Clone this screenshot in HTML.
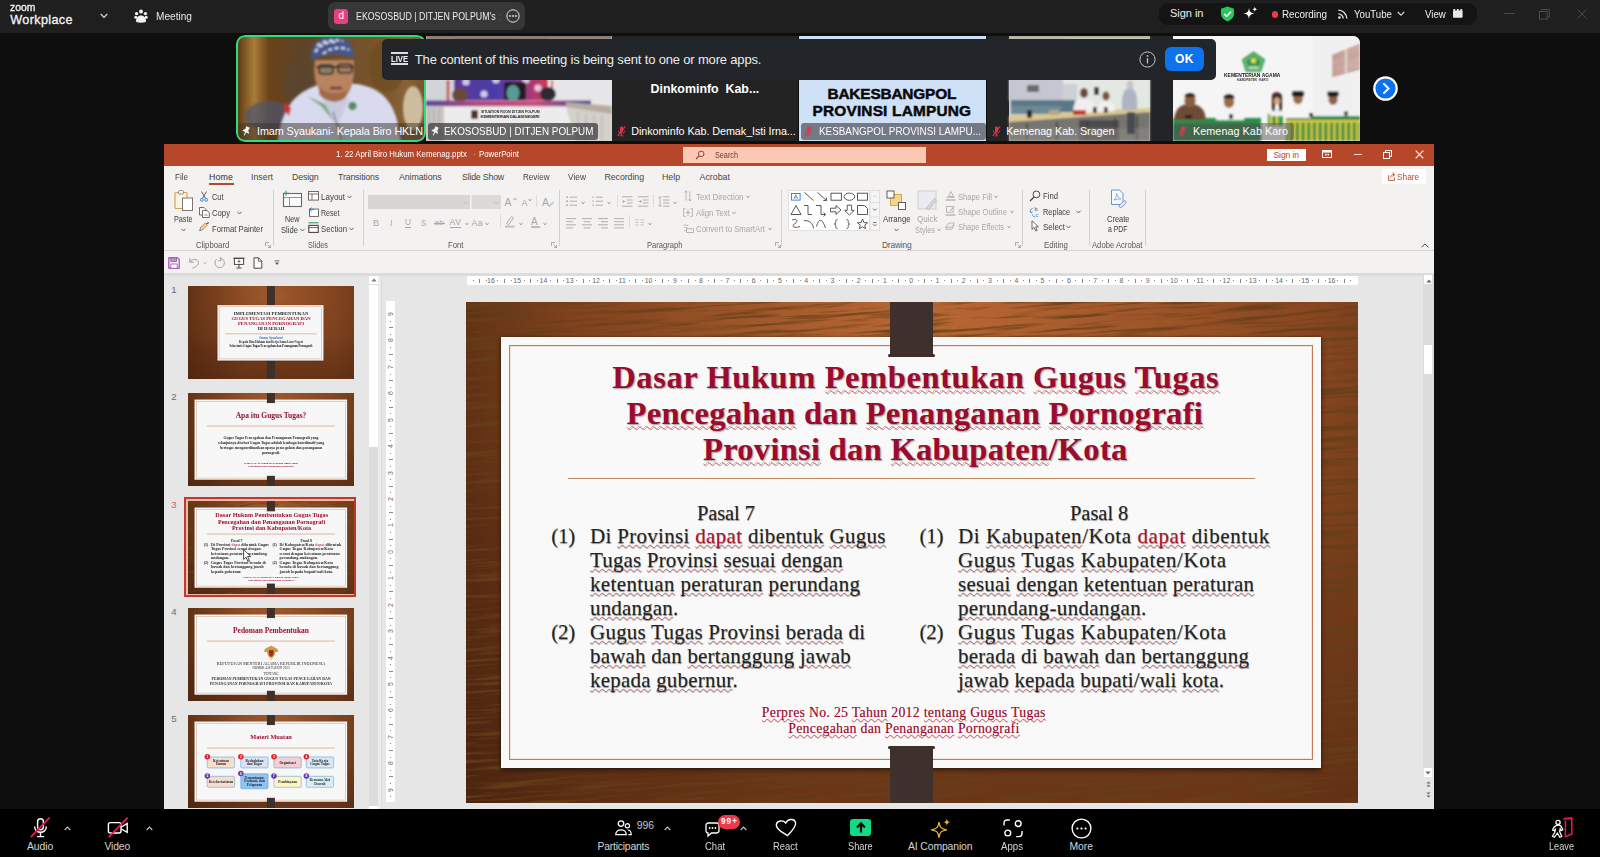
<!DOCTYPE html>
<html lang="en">
<head>
<meta charset="utf-8">
<title>Zoom Workplace - Meeting</title>
<style>
*{box-sizing:border-box;margin:0;padding:0}
html,body{width:1600px;height:857px;overflow:hidden;background:#0e0e0e}
body{position:relative;font-family:"Liberation Sans",sans-serif;color:#fff;font-size:11px}
.t{position:absolute;white-space:pre;line-height:1}
.b{position:absolute;display:block}
svg{overflow:visible}
#topbar{position:absolute;left:0;top:0;width:1600px;height:33px;background:#1f1f1f}
#bottombar{position:absolute;left:0;top:809px;width:1600px;height:48px;background:#000}
#strip{position:absolute;left:0;top:36px;width:1600px;height:106px}
#banner{position:absolute;left:382px;top:38.5px;width:834px;height:41px;background:#22262b;border-radius:5px}
#ppt{position:absolute;left:164px;top:144px;width:1270px;height:665px;background:#e6e6e6;overflow:hidden;color:#444}
#ptitle{position:absolute;left:0;top:0;width:1270px;height:22px;background:#b7472a}
#ptabs{position:absolute;left:0;top:22px;width:1270px;height:22px;background:#f3f2f1}
#pribbon{position:absolute;left:0;top:44px;width:1270px;height:63px;background:#f3f2f1;border-bottom:1px solid #d6d4d2}
#pqat{position:absolute;left:0;top:107px;width:1270px;height:22px;background:#f3f2f1}

#slide{position:absolute;left:302px;top:158px;width:892px;height:501px;overflow:hidden;background:#80421d}
.wood{position:absolute;inset:0;background-image:radial-gradient(ellipse 62% 75% at 52% 4%,rgba(222,128,66,.62) 0%,rgba(190,104,50,.3) 55%,rgba(160,84,40,0) 100%),linear-gradient(90deg,rgba(28,10,2,.42) 0,rgba(28,10,2,.2) 12%,rgba(28,10,2,0) 40%,rgba(28,10,2,0) 85%,rgba(28,10,2,.12) 100%),linear-gradient(180deg,rgba(28,10,2,0) 50%,rgba(28,10,2,.22) 100%)}
#paper{position:absolute;left:35px;top:35px;width:820px;height:431px;background:#f9f9f9;box-shadow:0 2px 5px rgba(0,0,0,.55),0 0 2px rgba(0,0,0,.3)}
#paper .inner{position:absolute;left:8px;top:8px;right:8px;bottom:8px;border:1px solid #c27c56;box-shadow:inset 0 0 0 1px rgba(236,214,190,.55)}
.grain{position:absolute;left:0;top:0}
.clip{position:absolute;left:424px;width:43px;background:#3e312c}
.clip i{position:absolute;left:-2px;right:-2px;height:3px;background:#3e312c;border-radius:2px}
.serif{font-family:"Liberation Serif",serif}
.ln1{position:absolute;white-space:nowrap;line-height:1}
#stitle{font-weight:bold;color:#9c0a2d;text-shadow:1px 1px 1.5px rgba(0,0,0,.38)}
#stitle .sq{text-decoration-color:rgba(214,52,62,.45);text-underline-offset:1px}
#sline{position:absolute;left:102px;top:176px;width:687px;height:1px;background:#c08a62}
.body{color:#242424;text-shadow:.4px .5px .8px rgba(0,0,0,.42)}
.body b{font-weight:normal;color:#b40f30}
.sq{text-decoration:underline wavy rgba(214,52,62,.62);text-decoration-thickness:.7px;text-underline-offset:.6px;text-decoration-skip-ink:none}
#sfoot{color:#9c0a2d;text-shadow:.3px .3px .5px rgba(120,0,20,.4)}

.th{position:absolute;left:24px;width:166px;height:93px;overflow:hidden;background:#783e1c}
.th .full{position:absolute;left:0;top:0;width:892px;height:501px;transform:scale(.1861);transform-origin:0 0;font-family:"Liberation Serif",serif;color:#262626;text-align:center}
.th .wood{position:absolute;inset:0;background-image:radial-gradient(ellipse 65% 80% at 52% 10%,rgba(200,116,60,.5) 0%,rgba(170,96,46,.22) 55%,rgba(150,80,40,0) 100%),linear-gradient(90deg,rgba(28,10,2,.3) 0,rgba(28,10,2,0) 35%,rgba(28,10,2,0) 88%,rgba(28,10,2,.1) 100%),linear-gradient(180deg,rgba(28,10,2,0) 55%,rgba(28,10,2,.2) 100%)}
.th .pp{position:absolute;left:35px;top:35px;width:820px;height:431px;background:#f8f7f7;box-shadow:0 2px 6px rgba(0,0,0,.5)}
.th .pp i{position:absolute;left:8px;top:8px;right:8px;bottom:8px;border:2px solid #bd8a62}
.th .ttl{position:absolute;left:0;width:892px;font-weight:bold;color:#9d0b2e;white-space:nowrap}
.th .ln{position:absolute;left:102px;top:176px;width:687px;height:3px;background:#c08a62}
.th .tx{position:absolute;left:0;width:892px;white-space:nowrap;font-weight:bold}
.thsel{position:absolute;left:20.3px;top:353.4px;width:171.8px;height:99.2px;border:2.4px solid #c2382b;background:#ecb9ab}
.mm{position:absolute;width:150px;height:62px;border:3px solid #5aa0d8;border-radius:8px;font-size:19px;line-height:20px;font-weight:bold;display:flex;align-items:center;justify-content:center;text-align:center}
.mm em{position:absolute;left:-16px;top:-18px;width:30px;height:30px;border-radius:50%;font-style:normal;color:#fff;font-size:18px;line-height:30px;font-family:"Liberation Sans",sans-serif}

.t3 .s3{position:absolute;inset:0;text-align:left}
.t3 .stitle{font-weight:bold;color:#9d0b2e}
.t3 .sfoot{color:#9d0b2e;font-weight:bold}
.t3 .sq{text-decoration:none}
.t3 .body{font-weight:bold;text-shadow:none}
.rn{position:absolute;font-size:6.9px;line-height:1;color:#666;white-space:nowrap;transform:translate(-50%,-50%)}
.vn{position:absolute;font-size:6.9px;line-height:1;color:#666;white-space:nowrap;transform:translate(-50%,-50%) rotate(-90deg)}

.tile{position:absolute;top:0;height:105px;background:#232323;overflow:hidden}
.tl{position:absolute;left:2px;top:87px;height:17px;border-radius:3px;background:rgba(30,30,30,.45)}
</style>
</head>
<body>
<div id="topbar"><span class="t" style="left:10.3px;top:0.8px;font-size:11.60px;transform:scaleX(0.8919);transform-origin:0 50%;color:#f2f2f2;-webkit-text-stroke:.35px #f2f2f2;">zoom</span><span class="t" style="left:10.3px;top:13.7px;font-size:12.60px;letter-spacing:0.36px;color:#f5f5f5;-webkit-text-stroke:.3px #f5f5f5;">Workplace</span><svg class="b" style="left:100.0px;top:13.0px;" width="8" height="6" viewBox="0 0 8 6"><path d="M.8 1L4 4.4L7.2 1" fill="none" stroke="#d8d8d8" stroke-width="1.2"/></svg><svg class="b" style="left:133.5px;top:9.0px;" width="14" height="14" viewBox="0 0 14 14"><circle cx="7" cy="2.6" r="2" fill="#f2f2f2"/><circle cx="2.6" cy="4.6" r="1.7" fill="#f2f2f2"/><circle cx="11.4" cy="4.6" r="1.7" fill="#f2f2f2"/><path d="M2.2 13C1.4 9 4 6.4 7 6.4C10 6.4 12.6 9 11.8 13C9 14 5 14 2.2 13Z" fill="#f2f2f2"/><circle cx="1.8" cy="8.2" r="1.5" fill="#f2f2f2"/><circle cx="12.2" cy="8.2" r="1.5" fill="#f2f2f2"/></svg><span class="t" style="left:155.6px;top:10.8px;font-size:10.80px;transform:scaleX(0.9369);transform-origin:0 50%;color:#e8e8e8;">Meeting</span><div class="b" style="left:328.0px;top:2.0px;width:197.0px;height:28.0px;background:#373737;border-radius:7px"></div><div class="b" style="left:334.0px;top:9.4px;width:14.3px;height:14.2px;background:#e8407c;border-radius:3px"></div><span class="t" style="left:338.4px;top:11.4px;font-size:10.00px;color:#fff;">d</span><span class="t" style="left:356.3px;top:11.1px;font-size:10.60px;transform:scaleX(0.8319);transform-origin:0 50%;color:#ececec;">EKOSOSBUD | DITJEN POLPUM's</span><span class="t" style="left:498.5px;top:11.1px;font-size:10.60px;color:#666;">:</span><svg class="b" style="left:506.0px;top:9.0px;" width="14" height="14" viewBox="0 0 14 14"><circle cx="7" cy="7" r="6.2" fill="none" stroke="#e6e6e6" stroke-width="1"/><circle cx="4" cy="7" r=".9" fill="#e6e6e6"/><circle cx="7" cy="7" r=".9" fill="#e6e6e6"/><circle cx="10" cy="7" r=".9" fill="#e6e6e6"/></svg><div class="b" style="left:1158.5px;top:2.5px;width:318.0px;height:22.5px;background:#141414;border-radius:9px"></div><span class="t" style="left:1170.0px;top:8.3px;font-size:11.00px;letter-spacing:-0.03px;color:#f0f0f0;">Sign in</span><svg class="b" style="left:1219.5px;top:6.0px;" width="15" height="16" viewBox="0 0 15 16"><path d="M7.5 .6L14 2.8V7.6C14 11.6 11 14.2 7.5 15.4C4 14.2 1 11.6 1 7.6V2.8Z" fill="#26c857"/><path d="M4.2 8L6.6 10.4L11 5.6" fill="none" stroke="#fff" stroke-width="1.6"/></svg><svg class="b" style="left:1243.0px;top:6.0px;" width="15" height="15" viewBox="0 0 15 15"><path d="M6 2C6.6 6 7.6 7 11.6 7.6C7.6 8.2 6.6 9.2 6 13.2C5.4 9.2 4.4 8.2 .4 7.6C4.4 7 5.4 6 6 2Z" fill="#fff"/><path d="M11.8 .4C12.1 2.4 12.6 2.9 14.6 3.2C12.6 3.5 12.1 4 11.8 6C11.5 4 11 3.5 9 3.2C11 2.9 11.5 2.4 11.8 .4Z" fill="#fff"/></svg><div class="b" style="left:1271.5px;top:11.2px;width:6.6px;height:6.6px;background:#f0384a;border-radius:50%"></div><span class="t" style="left:1281.6px;top:9.1px;font-size:10.60px;transform:scaleX(0.9313);transform-origin:0 50%;color:#f0f0f0;">Recording</span><svg class="b" style="left:1338.0px;top:8.5px;" width="10" height="10" viewBox="0 0 10 10"><circle cx="1.4" cy="8.6" r="1.3" fill="#e6e6e6"/><path d="M.4 4.8C3 4.8 5.2 7 5.2 9.6M.4 1.2C5 1.2 8.8 5 8.8 9.6" fill="none" stroke="#e6e6e6" stroke-width="1.3"/></svg><span class="t" style="left:1353.9px;top:8.5px;font-size:10.60px;transform:scaleX(0.9098);transform-origin:0 50%;color:#f0f0f0;">YouTube</span><svg class="b" style="left:1397.0px;top:11.0px;" width="8" height="6" viewBox="0 0 8 6"><path d="M.8 1L4 4.2L7.2 1" fill="none" stroke="#d8d8d8" stroke-width="1.1"/></svg><span class="t" style="left:1425.0px;top:8.5px;font-size:10.60px;transform:scaleX(0.9129);transform-origin:0 50%;color:#f0f0f0;">View</span><svg class="b" style="left:1453.0px;top:9.0px;" width="10" height="9" viewBox="0 0 10 9"><rect x="0" y="1.6" width="9.6" height="7.2" rx="1" fill="#e8e8e8"/><rect x=".4" y="0" width="1.8" height="2.4" fill="#e8e8e8"/><rect x="3.9" y="0" width="1.8" height="2.4" fill="#e8e8e8"/><rect x="7.4" y="0" width="1.8" height="2.4" fill="#e8e8e8"/></svg><div class="b" style="left:1504.0px;top:13.0px;width:11.0px;height:1.0px;background:#4c4c4c;"></div><svg class="b" style="left:1538.5px;top:8.5px;" width="11" height="11" viewBox="0 0 11 11"><rect x=".5" y="2.5" width="7.6" height="7.6" fill="none" stroke="#4c4c4c" stroke-width="1"/><path d="M2.6 2.5V.5H10.4V8.2H8.2" fill="none" stroke="#4c4c4c" stroke-width="1"/></svg><svg class="b" style="left:1577.0px;top:8.5px;" width="10" height="10" viewBox="0 0 10 10"><path d="M.6 .6L9.4 9.4M9.4 .6L.6 9.4" stroke="#4c4c4c" stroke-width="1"/></svg></div>
<div id="strip"><div class="tile" style="left:236px;top:-1.2px;width:190px;height:107.4px;border-radius:9px"><div class="b" style="left:1px;top:1.2px;width:189px;height:105px"><svg class="b" style="left:0.0px;top:0.0px;" width="189" height="105" viewBox="0 0 189 105"><defs><filter id="bl1" x="-5%" y="-5%" width="110%" height="110%"><feGaussianBlur stdDeviation="1.0"/></filter></defs><defs><linearGradient id="t1bg" x1="0" x2="1" y1="0" y2="0"><stop offset="0" stop-color="#5a3814"/><stop offset=".09" stop-color="#a87c38"/><stop offset=".17" stop-color="#6a4218"/><stop offset=".35" stop-color="#5c4428"/><stop offset=".55" stop-color="#6e5030"/><stop offset=".75" stop-color="#7a5428"/><stop offset=".9" stop-color="#8a6238"/><stop offset="1" stop-color="#7a5026"/></linearGradient></defs><rect width="189" height="105" fill="url(#t1bg)"/><g filter="url(#bl1)"><ellipse cx="32" cy="80" rx="24" ry="15" fill="#4c5470" opacity=".7"/><ellipse cx="60" cy="48" rx="14" ry="22" fill="#5a4630" opacity=".8"/><ellipse cx="176" cy="72" rx="10" ry="22" fill="#cdbd9e"/><ellipse cx="150" cy="30" rx="18" ry="26" fill="#6a4a22" opacity=".6"/><path d="M40 106C44 84 50 64 70 54L86 46L120 48C144 52 154 64 160 84L164 106Z" fill="#d9daee"/><path d="M70 60L96 72L104 94L84 70Z" fill="#7aa87a"/><path d="M84 60L100 92L112 62Z" fill="#c9c9e0"/><path d="M96 76C100 90 104 98 104 106" stroke="#555" stroke-width="1" fill="none"/><path d="M78 24C76 40 78 58 96 66C112 66 118 50 117 24Z" fill="#b8835f"/><path d="M82 50C88 58 100 60 110 54L108 62C100 68 88 66 82 58Z" fill="#a06a4a"/><path d="M75 24C72 8 82 1 96 1C110 1 118 8 116 22C104 16 88 17 75 24Z" fill="#46568c"/><path d="M78 16C84 8 92 5 100 6M86 18C92 12 104 10 112 14M80 10C86 5 96 3 106 5" stroke="#d4daea" stroke-width="2.2" fill="none" stroke-dasharray="4 2.5"/><path d="M79 31H117" stroke="#2a2622" stroke-width="2"/><rect x="82" y="29" width="14" height="9" rx="3" fill="rgba(90,120,110,.45)" stroke="#2a2622" stroke-width="1.5"/><rect x="101" y="28" width="14" height="9" rx="3" fill="rgba(120,110,100,.3)" stroke="#2a2622" stroke-width="1.5"/><path d="M93 52H105" stroke="#6a3228" stroke-width="2.4"/><circle cx="115.5" cy="70" r="4.2" fill="#5c8a58"/><path d="M48 66L54 72L52 80L47 74Z" fill="#c83232"/></g></svg><div class="tl" style="width:186px;background:rgba(58,50,44,.5)"></div><svg class="b" style="left:5.0px;top:89.5px;" width="9" height="11" viewBox="0 0 9 11"><path d="M2.2 .6H6.2L5.8 3.6L7.6 5.6V6.4H4.7V9.4L4.2 10.2L3.7 9.4V6.4H.8V5.6L2.6 3.6Z" fill="#f0f0f0" transform="rotate(25 4.2 5)"/></svg><span class="t" style="left:20.0px;top:90.3px;font-size:10.80px;letter-spacing:-0.09px;color:#fff;">Imam Syaukani- Kepala Biro HKLN</span></div><div class="b" style="inset:0;border:2.5px solid #2fdc80;border-radius:9px"></div></div><div class="tile" style="left:426px;width:186px"><svg class="b" style="left:0.0px;top:0.0px;" width="186" height="105" viewBox="0 0 186 105"><defs><filter id="bl2" x="-5%" y="-5%" width="110%" height="110%"><feGaussianBlur stdDeviation="1.0"/></filter></defs><defs><linearGradient id="t2bd" x1="0" x2="1"><stop offset="0" stop-color="#5a3a9c"/><stop offset=".45" stop-color="#4a3aa8"/><stop offset=".7" stop-color="#8a3a90"/><stop offset="1" stop-color="#d83850"/></linearGradient><linearGradient id="t2st" x1="0" x2="1"><stop offset="0" stop-color="#5a4a98"/><stop offset=".3" stop-color="#b04a80"/><stop offset=".65" stop-color="#c8507a"/><stop offset="1" stop-color="#4a489a"/></linearGradient></defs><rect width="186" height="105" fill="#dcdcde"/><g filter="url(#bl2)"><rect x="0" y="0" width="28" height="70" fill="#d2d4da"/><rect x="122" y="0" width="64" height="72" fill="#e6e6e8"/><rect x="28" y="0" width="94" height="64" fill="url(#t2bd)"/><rect x="0" y="-2" width="186" height="6" fill="#8c7c72"/><circle cx="40" cy="46" r="3.6" fill="#e8e0ee" opacity=".85"/><circle cx="58" cy="58" r="3.6" fill="#e8e0ee" opacity=".85"/><circle cx="70" cy="44" r="3.6" fill="#e8e0ee" opacity=".85"/><circle cx="86" cy="56" r="3.6" fill="#e8e0ee" opacity=".85"/><circle cx="100" cy="44" r="3.6" fill="#e8e0ee" opacity=".85"/><circle cx="112" cy="52" r="3.6" fill="#e8e0ee" opacity=".85"/><path d="M22 44V66" stroke="#c83a3a" stroke-width="2.5"/><path d="M126 44V62" stroke="#d84848" stroke-width="2"/><ellipse cx="34" cy="59" rx="8" ry="7" fill="#6a4a36"/><rect x="78" y="46" width="22" height="18" rx="3" fill="#1c1c22"/><ellipse cx="87" cy="57" rx="6.5" ry="8" fill="#5a9a94"/><ellipse cx="122" cy="58" rx="8" ry="7" fill="#2c2c34"/><rect x="0" y="64.5" width="165" height="6" fill="url(#t2st)"/><rect x="0" y="70.5" width="186" height="35" fill="#ececec"/><rect x="0" y="70.5" width="18" height="35" fill="#c9c6c2"/><path d="M3 72V105M8 72V105M13 72V105" stroke="#aeaaa6" stroke-width="1.2"/><path d="M140 70.5L186 76V105H150Z" fill="#d4d0cc"/><path d="M140 66L186 70V78L140 71Z" fill="#b8aca0"/><path d="M152 76V105M160 78V105M168 79V105M176 80V105" stroke="#b8b4b0" stroke-width="1.2"/><rect x="45" y="74" width="7" height="9" rx="1.5" fill="#4a3424"/></g></svg><span class="t" style="left:54.6px;top:74.2px;font-size:4.10px;transform:scaleX(0.8390);transform-origin:0 50%;color:#2a2a2a;font-weight:bold;">SITUATION ROOM DITJEN POLPUM</span><span class="t" style="left:54.6px;top:79.0px;font-size:4.10px;letter-spacing:-0.17px;color:#2a2a2a;font-weight:bold;">KEMENTERIAN DALAM NEGERI</span><div class="tl" style="width:169.5px;background:rgba(66,66,68,.78)"></div><svg class="b" style="left:5.0px;top:89.5px;" width="9" height="11" viewBox="0 0 9 11"><path d="M2.2 .6H6.2L5.8 3.6L7.6 5.6V6.4H4.7V9.4L4.2 10.2L3.7 9.4V6.4H.8V5.6L2.6 3.6Z" fill="#f0f0f0" transform="rotate(25 4.2 5)"/></svg><span class="t" style="left:18.3px;top:90.3px;font-size:10.80px;transform:scaleX(0.9136);transform-origin:0 50%;color:#fff;">EKOSOSBUD | DITJEN POLPUM</span></div><div class="tile" style="left:612px;width:186px"><span class="t" style="left:38.5px;top:47.1px;font-size:12.40px;color:#fff;font-weight:bold;">Dinkominfo  Kab...</span><div class="tl" style="width:183px;background:rgba(35,35,35,0)"></div><svg class="b" style="left:5.0px;top:89.5px;" width="9" height="11" viewBox="0 0 9 11"><path d="M3.1 1.8C3.1 .2 6 .2 6 1.8V5.2C6 6.8 3.1 6.8 3.1 5.2Z" fill="#e8344a"/><path d="M1.4 4.6C1.4 8.6 7.6 8.6 7.6 4.6M4.5 7.8V9.6M2.6 9.8H6.4" fill="none" stroke="#e8344a" stroke-width=".9"/><path d="M8.2 .4L.8 10" stroke="#e8344a" stroke-width="1.2"/></svg><span class="t" style="left:19.2px;top:90.3px;font-size:10.80px;letter-spacing:-0.07px;color:#fff;">Dinkominfo Kab. Demak_Isti Irna...</span></div><div class="tile" style="left:799px;width:187px"><div class="b" style="inset:0;background:#cfe1f7"></div><span class="t" style="left:28.5px;top:49.7px;font-size:15.40px;letter-spacing:-0.18px;color:#0a0a0a;font-weight:bold;-webkit-text-stroke:.5px #0a0a0a;">BAKESBANGPOL</span><span class="t" style="left:13.5px;top:67.0px;font-size:15.40px;letter-spacing:0.19px;color:#0a0a0a;font-weight:bold;-webkit-text-stroke:.5px #0a0a0a;">PROVINSI LAMPUNG</span><div class="tl" style="width:185px;background:rgba(104,110,120,.9)"></div><svg class="b" style="left:5.0px;top:89.5px;" width="9" height="11" viewBox="0 0 9 11"><path d="M3.1 1.8C3.1 .2 6 .2 6 1.8V5.2C6 6.8 3.1 6.8 3.1 5.2Z" fill="#e8344a"/><path d="M1.4 4.6C1.4 8.6 7.6 8.6 7.6 4.6M4.5 7.8V9.6M2.6 9.8H6.4" fill="none" stroke="#e8344a" stroke-width=".9"/><path d="M8.2 .4L.8 10" stroke="#e8344a" stroke-width="1.2"/></svg><span class="t" style="left:20.2px;top:90.3px;font-size:10.80px;transform:scaleX(0.9139);transform-origin:0 50%;color:#fff;">KESBANGPOL PROVINSI LAMPU...</span></div><div class="tile" style="left:987px;width:186px;background:#222426"><svg class="b" style="left:0.0px;top:0.0px;" width="186" height="105" viewBox="0 0 186 105"><defs><filter id="bl5" x="-5%" y="-5%" width="110%" height="110%"><feGaussianBlur stdDeviation="1.0"/></filter></defs><rect x="22" y="0" width="141" height="105" fill="#cfcfd6"/><rect x="22" y="0" width="141" height="3" fill="#b4b4a0"/><g filter="url(#bl5)"><rect x="22" y="3" width="60" height="62" fill="#c6c6d2"/><rect x="76" y="3" width="87" height="70" fill="#e4e8e2"/><rect x="76" y="48" width="14" height="22" fill="#cdd0d6"/><rect x="40" y="49" width="12" height="7" fill="#6a6a6e"/><rect x="107" y="51" width="5" height="8" fill="#3a3836"/><rect x="24" y="64" width="64" height="12" fill="#5a7888"/><rect x="24" y="70" width="50" height="8" fill="#6e8a94"/><path d="M22 80L163 72V76L22 86Z" fill="#dcc88e"/><path d="M22 86L163 76V105H22Z" fill="#77756f"/><path d="M40 88V105M70 86V105M100 84V105M128 82V105M150 80V105" stroke="#3c3c3a" stroke-width="1.6"/><rect x="92" y="84" width="40" height="21" fill="#3e3e40" opacity=".75"/><rect x="22" y="92" width="141" height="13" fill="#8e8c86" opacity=".5"/><path d="M86 78C86 66 90 62 97 62C104 62 108 66 108 76Z" fill="#f0eeee"/><ellipse cx="97" cy="57" rx="4" ry="5" fill="#6a4a3a"/><path d="M110 76C110 68 114 65 119 65C125 65 128 68 128 75Z" fill="#f2f0f0"/><ellipse cx="119" cy="60" rx="3.6" ry="4.6" fill="#7a5038"/><path d="M135 74C134 58 137 52 143 52C149 52 151 60 150 74Z" fill="#aeb4c2"/><ellipse cx="143" cy="49" rx="3.5" ry="4.5" fill="#c8c4c8"/><path d="M140 76H148V98H140Z" fill="#4a4a52"/><rect x="86" y="74" width="13" height="5" fill="#c23a34"/><rect x="40" y="74" width="5" height="8" fill="#2c2a2a"/><rect x="106" y="71" width="3.5" height="6" fill="#2c2424"/><rect x="117" y="71" width="3.5" height="6" fill="#3a2422"/><rect x="62" y="74" width="10" height="5" fill="#b4a888"/></g></svg><div class="tl" style="width:132px;background:rgba(50,50,50,.0)"></div><svg class="b" style="left:5.0px;top:89.5px;" width="9" height="11" viewBox="0 0 9 11"><path d="M3.1 1.8C3.1 .2 6 .2 6 1.8V5.2C6 6.8 3.1 6.8 3.1 5.2Z" fill="#e8344a"/><path d="M1.4 4.6C1.4 8.6 7.6 8.6 7.6 4.6M4.5 7.8V9.6M2.6 9.8H6.4" fill="none" stroke="#e8344a" stroke-width=".9"/><path d="M8.2 .4L.8 10" stroke="#e8344a" stroke-width="1.2"/></svg><span class="t" style="left:19.2px;top:90.3px;font-size:10.80px;letter-spacing:-0.05px;color:#fff;">Kemenag Kab. Sragen</span></div><div class="tile" style="left:1173px;width:187px;border-radius:0 7px 0 0"><svg class="b" style="left:0.0px;top:0.0px;" width="187" height="105" viewBox="0 0 187 105"><defs><filter id="bl6" x="-5%" y="-5%" width="110%" height="110%"><feGaussianBlur stdDeviation="0.8"/></filter></defs><rect width="187" height="105" fill="#f5f5f5"/><g filter="url(#bl6)"><rect x="140" y="0" width="47" height="80" fill="#f0f0f0"/><path d="M159 20 L187 9" stroke="#a8604c" stroke-width="1.7"/><path d="M159 22.9 L187 12.3" stroke="#a8604c" stroke-width="1.7"/><path d="M159 25.8 L187 15.6" stroke="#a8604c" stroke-width="1.7"/><path d="M159 28.7 L187 18.9" stroke="#a8604c" stroke-width="1.7"/><path d="M159 31.6 L187 22.2" stroke="#a8604c" stroke-width="1.7"/><path d="M159 34.5 L187 25.5" stroke="#a8604c" stroke-width="1.7"/><path d="M159 37.4 L187 28.8" stroke="#a8604c" stroke-width="1.7"/><path d="M159 40.3 L187 32.1" stroke="#a8604c" stroke-width="1.7"/><path d="M158.5 18V42M173 12V38" stroke="#f0ebe8" stroke-width="1.4"/><path d="M80.5 15.5L92 23.5L88 35.8H73L69 23.5Z" fill="#2a9a4c"/><path d="M80.5 18.6L89 24.6L86 33.4H75L72 24.6Z" fill="none" stroke="#dff0c8" stroke-width=".7"/><circle cx="80.5" cy="24.5" r="2.6" fill="#e8dc5a"/><path d="M75.5 31.4H85.5" stroke="#f4f4e8" stroke-width="1.5"/><path d="M0 82H88V88H0Z" fill="#2c8c4a"/><path d="M0 88H88V105H0Z" fill="#1f6e3a"/><path d="M95 78H110V90H95Z" fill="#3a9a4a"/><path d="M98 78V90M104 78V90" stroke="#e6d23c" stroke-width="2.2"/><path d="M113 80H187V85H113Z" fill="#2c8c4a"/><rect x="113" y="85" width="74" height="20" fill="#2c8c4a"/><rect x="114.5" y="85" width="2.6" height="20" fill="#d8c83a"/><rect x="120.2" y="85" width="2.6" height="20" fill="#d8c83a"/><rect x="125.9" y="85" width="2.6" height="20" fill="#d8c83a"/><rect x="131.6" y="85" width="2.6" height="20" fill="#d8c83a"/><rect x="137.3" y="85" width="2.6" height="20" fill="#d8c83a"/><rect x="143" y="85" width="2.6" height="20" fill="#d8c83a"/><rect x="148.7" y="85" width="2.6" height="20" fill="#d8c83a"/><rect x="154.4" y="85" width="2.6" height="20" fill="#d8c83a"/><rect x="160.1" y="85" width="2.6" height="20" fill="#d8c83a"/><rect x="165.8" y="85" width="2.6" height="20" fill="#d8c83a"/><rect x="171.5" y="85" width="2.6" height="20" fill="#d8c83a"/><rect x="177.2" y="85" width="2.6" height="20" fill="#d8c83a"/><rect x="182.9" y="85" width="2.6" height="20" fill="#d8c83a"/><rect x="113" y="84" width="74" height="2.4" fill="#e0cc3c"/><path d="M1 84C2 72 8 68 17 68C27 68 32 73 33 84Z" fill="#6e4c36"/><ellipse cx="17" cy="65" rx="5.4" ry="6.4" fill="#8c5c40"/><path d="M11.6 61C12 56 22 56 22.4 61Z" fill="#2a1c16"/><path d="M43 84C44 74 49 70 57 70C65 70 70 74 71 84Z" fill="#f4f4f4"/><ellipse cx="56" cy="66" rx="5" ry="6" fill="#9a6a4c"/><path d="M50.6 62.5C51 57 61 57 61.4 62.5Z" fill="#1e1614"/><path d="M97 80C97 74 100 71 104 71C108 71 111 74 111 80Z" fill="#f2f0f0"/><path d="M99 60C99 55 109 55 109 61V75H106V68H102V75H99Z" fill="#3e2a22"/><ellipse cx="104" cy="65" rx="3" ry="3.8" fill="#d8a888"/><path d="M112 82C113 70 118 66 125 66C133 66 137 71 138 82Z" fill="#f5f5f5"/><ellipse cx="125" cy="63" rx="4.6" ry="5.2" fill="#9a6c4e"/><rect x="119.4" y="55.6" width="11.2" height="5" rx="1" fill="#121212"/><path d="M147 80C148 72 153 68 161 68C169 68 174 72 175 80Z" fill="#f1f1f5"/><ellipse cx="160" cy="63.5" rx="4.6" ry="5.2" fill="#8e5e44"/><rect x="154.4" y="55.6" width="11.2" height="5" rx="1" fill="#121212"/><rect x="12" y="79" width="7" height="3.4" fill="#222"/><rect x="56" y="78" width="4" height="5" fill="#2a2222"/><rect x="136" y="77" width="4" height="4" fill="#333"/><rect x="171" y="75.5" width="4" height="4" fill="#333"/></g></svg><span class="t" style="left:51.0px;top:36.9px;font-size:5.60px;transform:scaleX(0.8888);transform-origin:0 50%;color:#1a1a1a;font-weight:bold;">KEMENTERIAN AGAMA</span><span class="t" style="left:64.0px;top:42.9px;font-size:3.00px;letter-spacing:0.17px;color:#333;font-weight:bold;">KABUPATEN  KARO</span><div class="tl" style="width:119px;background:rgba(96,96,90,.55)"></div><svg class="b" style="left:5.0px;top:89.5px;" width="9" height="11" viewBox="0 0 9 11"><path d="M3.1 1.8C3.1 .2 6 .2 6 1.8V5.2C6 6.8 3.1 6.8 3.1 5.2Z" fill="#e8344a"/><path d="M1.4 4.6C1.4 8.6 7.6 8.6 7.6 4.6M4.5 7.8V9.6M2.6 9.8H6.4" fill="none" stroke="#e8344a" stroke-width=".9"/><path d="M8.2 .4L.8 10" stroke="#e8344a" stroke-width="1.2"/></svg><span class="t" style="left:20.0px;top:90.3px;font-size:10.80px;letter-spacing:0.05px;color:#fff;">Kemenag Kab Karo</span></div><svg class="b" style="left:1372.5px;top:39.5px;" width="25" height="25" viewBox="0 0 25 25"><circle cx="12.5" cy="12.5" r="11.2" fill="#0e72ed" stroke="#fff" stroke-width="2.2"/><path d="M10.4 7.4L15.6 12.5L10.4 17.6" fill="none" stroke="#fff" stroke-width="2"/></svg></div>
<div id="ppt">
<div id="ptitle"><span class="t" style="left:172.0px;top:6.4px;font-size:8.60px;transform:scaleX(0.9135);transform-origin:0 50%;color:#fff;">1. 22 April Biro Hukum Kemenag.pptx</span><span class="t" style="left:309.0px;top:6.4px;font-size:8.60px;letter-spacing:0.14px;color:#f0c8bc;">·</span><span class="t" style="left:315.0px;top:6.4px;font-size:8.60px;transform:scaleX(0.9095);transform-origin:0 50%;color:#fff;">PowerPoint</span><div class="b" style="left:519.0px;top:3.0px;width:243.0px;height:16.0px;background:#fbc8b4;"></div><svg class="b" style="left:531.0px;top:6.0px;" width="10" height="10" viewBox="0 0 10 10"><circle cx="6.2" cy="3.8" r="2.8" fill="none" stroke="#8a4a38" stroke-width="1"/><path d="M4.2 5.8L1 9" stroke="#8a4a38" stroke-width="1.1"/></svg><span class="t" style="left:551.0px;top:7.1px;font-size:8.60px;transform:scaleX(0.8440);transform-origin:0 50%;color:#6b3a2c;">Search</span><div class="b" style="left:1103.0px;top:4.5px;width:39.0px;height:12.5px;background:#fff;"></div><span class="t" style="left:1109.5px;top:6.8px;font-size:8.60px;letter-spacing:-0.11px;color:#b7472a;">Sign in</span><svg class="b" style="left:1158.0px;top:6.0px;" width="10" height="8" viewBox="0 0 10 8"><rect x=".5" y=".5" width="9" height="7" fill="none" stroke="#fff" stroke-width="1"/><rect x="1" y="1" width="8" height="1.6" fill="#fff"/><path d="M3 4.7h4M5.8 3.6L7 4.7L5.8 5.8M4.2 3.6L3 4.7L4.2 5.8" stroke="#fff" stroke-width=".7" fill="none"/></svg><div class="b" style="left:1190.0px;top:10.0px;width:8.0px;height:1.0px;background:#f3d6cd;"></div><svg class="b" style="left:1219.0px;top:6.0px;" width="9" height="9" viewBox="0 0 9 9"><rect x=".5" y="2.5" width="6" height="6" fill="none" stroke="#fff" stroke-width="1"/><path d="M2.5 2.5V.5H8.5V6.5H6.5" fill="none" stroke="#fff" stroke-width="1"/></svg><svg class="b" style="left:1250.6px;top:6.4px;" width="8.4" height="8.4" viewBox="0 0 8.4 8.4"><path d="M.7 .7L8.3 8.3M8.3 .7L.7 8.3" stroke="#fff" stroke-width="1.1"/></svg></div>
<div id="ptabs"><span class="t" style="left:10.5px;top:6.7px;font-size:8.80px;transform:scaleX(0.9168);transform-origin:0 50%;color:#484644;">File</span><span class="t" style="left:45.0px;top:6.7px;font-size:8.80px;letter-spacing:0.13px;color:#323130;">Home</span><span class="t" style="left:87.0px;top:6.7px;font-size:8.80px;color:#484644;">Insert</span><span class="t" style="left:128.0px;top:6.7px;font-size:8.80px;letter-spacing:-0.15px;color:#484644;">Design</span><span class="t" style="left:174.0px;top:6.7px;font-size:8.80px;letter-spacing:-0.16px;color:#484644;">Transitions</span><span class="t" style="left:235.0px;top:6.7px;font-size:8.80px;letter-spacing:-0.10px;color:#484644;">Animations</span><span class="t" style="left:298.0px;top:6.7px;font-size:8.80px;letter-spacing:-0.20px;color:#484644;">Slide Show</span><span class="t" style="left:359.0px;top:6.7px;font-size:8.80px;transform:scaleX(0.9184);transform-origin:0 50%;color:#484644;">Review</span><span class="t" style="left:404.0px;top:6.7px;font-size:8.80px;transform:scaleX(0.9516);transform-origin:0 50%;color:#484644;">View</span><span class="t" style="left:440.5px;top:6.7px;font-size:8.80px;letter-spacing:-0.07px;color:#484644;">Recording</span><span class="t" style="left:498.0px;top:6.7px;font-size:8.80px;letter-spacing:-0.02px;color:#484644;">Help</span><span class="t" style="left:535.5px;top:6.7px;font-size:8.80px;letter-spacing:0.02px;color:#484644;">Acrobat</span><div class="b" style="left:45.0px;top:17.0px;width:25.0px;height:1.6px;background:#b7472a;"></div><div class="b" style="left:1218.0px;top:3.0px;width:44.0px;height:14.5px;background:#fff;border-radius:1px"></div><svg class="b" style="left:1223.5px;top:5.5px;" width="8" height="9" viewBox="0 0 8 9"><path d="M.6 3.2V8.4H6.4V5.5" fill="none" stroke="#b7472a" stroke-width=".9"/><path d="M2.6 5.6C2.8 3.6 4.2 2.6 6.2 2.6M4.6 .7L6.8 2.6L4.6 4.5" fill="none" stroke="#b7472a" stroke-width=".9"/></svg><span class="t" style="left:1233.2px;top:6.7px;font-size:8.80px;transform:scaleX(0.9453);transform-origin:0 50%;color:#b7472a;">Share</span></div>
<div id="pribbon"><svg class="b" style="left:10.0px;top:1.0px;" width="20" height="23" viewBox="0 0 20 23"><rect x="1" y="3.5" width="12" height="16" rx="1" fill="#fdf3e3" stroke="#d8a25a" stroke-width="1.2"/><rect x="4.5" y="1.5" width="5" height="3.6" rx="1" fill="#f3f2f1" stroke="#8a8886" stroke-width=".9"/><rect x="8.5" y="9" width="10" height="12.5" fill="#fff" stroke="#7a7876" stroke-width="1"/></svg><span class="t" style="left:10.0px;top:27.0px;font-size:8.60px;transform:scaleX(0.8412);transform-origin:0 50%;color:#3c3c3c;">Paste</span><svg class="b" style="left:16.5px;top:39.5px;" width="5" height="4" viewBox="0 0 5 4"><path d="M0.5 0.8 L2.5 3 L4.5 0.8" fill="none" stroke="#666" stroke-width="1"/></svg><svg class="b" style="left:36.0px;top:3.0px;" width="8" height="11" viewBox="0 0 8 11"><path d="M1.5 .5L5.5 7.5M6.5 .5L2.5 7.5" stroke="#555" stroke-width=".9" fill="none"/><circle cx="1.8" cy="8.8" r="1.4" fill="none" stroke="#2b7cd3" stroke-width=".9"/><circle cx="6.2" cy="8.8" r="1.4" fill="none" stroke="#2b7cd3" stroke-width=".9"/></svg><span class="t" style="left:48.0px;top:5.0px;font-size:8.60px;transform:scaleX(0.8593);transform-origin:0 50%;color:#3c3c3c;">Cut</span><svg class="b" style="left:35.0px;top:18.5px;" width="11" height="11" viewBox="0 0 11 11"><path d="M.5 .5H5L7 2.5V8H.5Z" fill="#fff" stroke="#605e5c" stroke-width=".9"/><path d="M3.5 3.5H8L10.3 5.7V10.5H3.5Z" fill="#fff" stroke="#605e5c" stroke-width=".9"/><path d="M5.5 8H8.5" stroke="#605e5c" stroke-width=".8"/></svg><span class="t" style="left:48.0px;top:21.0px;font-size:8.60px;transform:scaleX(0.8965);transform-origin:0 50%;color:#3c3c3c;">Copy</span><svg class="b" style="left:72.5px;top:23.0px;" width="5" height="4" viewBox="0 0 5 4"><path d="M0.5 0.8 L2.5 3 L4.5 0.8" fill="none" stroke="#666" stroke-width="1"/></svg><svg class="b" style="left:35.0px;top:34.0px;" width="11" height="11" viewBox="0 0 11 11"><path d="M6.2 .8L8.4 3L4 7.4L1.8 5.2Z" fill="#f6c98a" stroke="#d8913a" stroke-width=".8"/><path d="M7.3 1.9L9.8 .6" stroke="#605e5c" stroke-width="1.2"/><path d="M1.8 5.2L.6 8.8L4 7.4" fill="#fff" stroke="#605e5c" stroke-width=".8"/></svg><span class="t" style="left:48.0px;top:37.0px;font-size:8.60px;transform:scaleX(0.8967);transform-origin:0 50%;color:#3c3c3c;">Format Painter</span><span class="t" style="left:32.0px;top:53.1px;font-size:8.40px;transform:scaleX(0.9317);transform-origin:0 50%;color:#5a5856;">Clipboard</span><svg class="b" style="left:101.0px;top:53.5px;" width="6" height="6" viewBox="0 0 6 6"><path d="M0.5 4V0.5H4M2.5 2.5L5.5 5.5M5.5 3V5.5H3" fill="none" stroke="#9a9896" stroke-width=".8"/></svg><div class="b" style="left:109.0px;top:2.0px;width:1.0px;height:56.0px;background:#d2d0ce;"></div><svg class="b" style="left:117.0px;top:2.0px;" width="22" height="20" viewBox="0 0 22 20"><rect x="2.5" y="3.5" width="18" height="13" fill="#fbfbfb" stroke="#6a6866" stroke-width="1.1"/><path d="M3 7.5H20M8.5 7.5V16" stroke="#8a8886" stroke-width=".9"/><path d="M5 .5V6M2.2 3.2H7.8" stroke="#3a9a5c" stroke-width="1"/></svg><span class="t" style="left:121.0px;top:27.0px;font-size:8.60px;transform:scaleX(0.8428);transform-origin:0 50%;color:#3c3c3c;">New</span><span class="t" style="left:116.5px;top:37.5px;font-size:8.60px;transform:scaleX(0.8889);transform-origin:0 50%;color:#3c3c3c;">Slide</span><svg class="b" style="left:135.5px;top:39.5px;" width="5" height="4" viewBox="0 0 5 4"><path d="M0.5 0.8 L2.5 3 L4.5 0.8" fill="none" stroke="#666" stroke-width="1"/></svg><svg class="b" style="left:144.0px;top:3.0px;" width="11" height="10" viewBox="0 0 11 10"><rect x=".5" y=".5" width="10" height="8.6" fill="#fff" stroke="#605e5c" stroke-width=".9"/><path d="M.5 3H10.5M4 3V9" stroke="#605e5c" stroke-width=".9"/></svg><span class="t" style="left:156.5px;top:5.0px;font-size:8.60px;transform:scaleX(0.9295);transform-origin:0 50%;color:#3c3c3c;">Layout</span><svg class="b" style="left:183.0px;top:7.0px;" width="5" height="4" viewBox="0 0 5 4"><path d="M0.5 0.8 L2.5 3 L4.5 0.8" fill="none" stroke="#666" stroke-width="1"/></svg><svg class="b" style="left:144.0px;top:19.0px;" width="11" height="10" viewBox="0 0 11 10"><rect x="1.5" y="2" width="9" height="7.4" fill="#fff" stroke="#605e5c" stroke-width=".9"/><path d="M3.6 .6L1.2 2.6L3.6 4.6M1.4 2.6H6" fill="none" stroke="#2b7cd3" stroke-width=".9"/></svg><span class="t" style="left:156.5px;top:21.0px;font-size:8.60px;transform:scaleX(0.8235);transform-origin:0 50%;color:#3c3c3c;">Reset</span><svg class="b" style="left:144.0px;top:34.0px;" width="11" height="11" viewBox="0 0 11 11"><rect x=".8" y="3.4" width="9.4" height="7" fill="#fff" stroke="#484644" stroke-width="1.1"/><path d="M.5 .8H10.5" stroke="#3a9a5c" stroke-width="1.1"/><path d="M.8 5.6H10.2" stroke="#484644" stroke-width=".8"/></svg><span class="t" style="left:156.5px;top:37.0px;font-size:8.60px;transform:scaleX(0.9064);transform-origin:0 50%;color:#3c3c3c;">Section</span><svg class="b" style="left:185.0px;top:39.0px;" width="5" height="4" viewBox="0 0 5 4"><path d="M0.5 0.8 L2.5 3 L4.5 0.8" fill="none" stroke="#666" stroke-width="1"/></svg><span class="t" style="left:144.0px;top:53.1px;font-size:8.40px;transform:scaleX(0.8741);transform-origin:0 50%;color:#5a5856;">Slides</span><div class="b" style="left:199.0px;top:2.0px;width:1.0px;height:56.0px;background:#d2d0ce;"></div><div class="b" style="left:204.0px;top:6.5px;width:102.0px;height:14.5px;background:#d8d6d4;"></div><div class="b" style="left:306.5px;top:6.5px;width:30.5px;height:14.5px;background:#dcdad8;border-left:1px solid #e8e6e4"></div><svg class="b" style="left:299.0px;top:12.5px;" width="5" height="4" viewBox="0 0 5 4"><path d="M0.5 0.8 L2.5 3 L4.5 0.8" fill="none" stroke="#c2c0be" stroke-width="1"/></svg><svg class="b" style="left:330.0px;top:12.5px;" width="5" height="4" viewBox="0 0 5 4"><path d="M0.5 0.8 L2.5 3 L4.5 0.8" fill="none" stroke="#c2c0be" stroke-width="1"/></svg><span class="t" style="left:340.5px;top:9.3px;font-size:10.50px;letter-spacing:0.50px;color:#a9a7a5;">A</span><svg class="b" style="left:348.5px;top:9.0px;" width="4" height="4" viewBox="0 0 4 4"><path d="M0.5 3.2 L2 1 L3.5 3.2" fill="none" stroke="#a9a7a5" stroke-width="1"/></svg><span class="t" style="left:357.5px;top:10.5px;font-size:9.00px;color:#a9a7a5;">A</span><svg class="b" style="left:364.0px;top:9.5px;" width="4" height="4" viewBox="0 0 4 4"><path d="M0.5 0.8 L2 3 L3.5 0.8" fill="none" stroke="#a9a7a5" stroke-width="1"/></svg><div class="b" style="left:371.5px;top:7.0px;width:1.0px;height:12.0px;background:#dddbd9;"></div><span class="t" style="left:378.0px;top:9.3px;font-size:10.50px;letter-spacing:0.50px;color:#a9a7a5;">A</span><svg class="b" style="left:384.0px;top:12.5px;" width="6" height="6" viewBox="0 0 6 6"><path d="M.8 5L4.8 1L5.6 1.8L1.6 5.6Z" fill="none" stroke="#a9a7a5" stroke-width=".7"/></svg><span class="t" style="left:209.0px;top:30.6px;font-size:9.20px;letter-spacing:-0.14px;color:#a9a7a5;">B</span><span class="t" style="left:226.0px;top:30.6px;font-size:9.20px;transform:scaleX(0.8159);transform-origin:0 50%;color:#a9a7a5;font-style:italic;font-family:'Liberation Serif',serif;">I</span><span class="t" style="left:240.5px;top:30.2px;font-size:9.00px;transform:scaleX(0.9231);transform-origin:0 50%;color:#a9a7a5;">U</span><div class="b" style="left:240.5px;top:39.0px;width:6.5px;height:0.8px;background:#a9a7a5;"></div><span class="t" style="left:256.5px;top:30.6px;font-size:9.20px;transform:scaleX(0.8962);transform-origin:0 50%;color:#a9a7a5;">S</span><span class="t" style="left:270.5px;top:31.2px;font-size:8.00px;letter-spacing:0.30px;color:#a9a7a5;">ab</span><div class="b" style="left:269.5px;top:34.5px;width:11.5px;height:0.8px;background:#a9a7a5;"></div><span class="t" style="left:285.5px;top:29.7px;font-size:8.60px;letter-spacing:0.58px;color:#a9a7a5;">AV</span><div class="b" style="left:286.0px;top:38.6px;width:11.0px;height:0.7px;background:#a9a7a5;"></div><svg class="b" style="left:300.5px;top:33.5px;" width="4" height="4" viewBox="0 0 4 4"><path d="M0.5 0.8 L2 3 L3.5 0.8" fill="none" stroke="#a9a7a5" stroke-width="1"/></svg><span class="t" style="left:307.5px;top:30.8px;font-size:8.80px;letter-spacing:0.37px;color:#a9a7a5;">Aa</span><svg class="b" style="left:321.0px;top:33.5px;" width="4" height="4" viewBox="0 0 4 4"><path d="M0.5 0.8 L2 3 L3.5 0.8" fill="none" stroke="#a9a7a5" stroke-width="1"/></svg><div class="b" style="left:336.0px;top:26.0px;width:1.0px;height:14.0px;background:#dddbd9;"></div><svg class="b" style="left:340.0px;top:26.5px;" width="12" height="13" viewBox="0 0 12 13"><path d="M2.5 8.5L7.5 1.5L9.5 3L4.8 9.6Z" fill="none" stroke="#a9a7a5" stroke-width=".9"/><path d="M1 11.6H10.5" stroke="#bdbbb9" stroke-width="1.8"/></svg><svg class="b" style="left:355.0px;top:33.5px;" width="4" height="4" viewBox="0 0 4 4"><path d="M0.5 0.8 L2 3 L3.5 0.8" fill="none" stroke="#a9a7a5" stroke-width="1"/></svg><span class="t" style="left:367.0px;top:29.2px;font-size:10.00px;letter-spacing:0.83px;color:#a9a7a5;">A</span><div class="b" style="left:366.5px;top:38.3px;width:9.0px;height:1.8px;background:#bdbbb9;"></div><svg class="b" style="left:378.5px;top:33.5px;" width="4" height="4" viewBox="0 0 4 4"><path d="M0.5 0.8 L2 3 L3.5 0.8" fill="none" stroke="#a9a7a5" stroke-width="1"/></svg><span class="t" style="left:283.5px;top:53.1px;font-size:8.40px;transform:scaleX(0.9222);transform-origin:0 50%;color:#5a5856;">Font</span><svg class="b" style="left:386.5px;top:53.5px;" width="6" height="6" viewBox="0 0 6 6"><path d="M0.5 4V0.5H4M2.5 2.5L5.5 5.5M5.5 3V5.5H3" fill="none" stroke="#9a9896" stroke-width=".8"/></svg><div class="b" style="left:395.0px;top:2.0px;width:1.0px;height:56.0px;background:#d2d0ce;"></div><svg class="b" style="left:401.5px;top:8.0px;" width="12" height="11" viewBox="0 0 12 11"><rect x=".3" y="0.4" width="1.6" height="1.6" fill="#a9a7a5"/><path d="M3.6 1.2H11" stroke="#a9a7a5" stroke-width=".9"/><rect x=".3" y="4.4" width="1.6" height="1.6" fill="#a9a7a5"/><path d="M3.6 5.2H11" stroke="#a9a7a5" stroke-width=".9"/><rect x=".3" y="8.4" width="1.6" height="1.6" fill="#a9a7a5"/><path d="M3.6 9.2H11" stroke="#a9a7a5" stroke-width=".9"/></svg><svg class="b" style="left:417.0px;top:12.5px;" width="4" height="4" viewBox="0 0 4 4"><path d="M0.5 0.8 L2 3 L3.5 0.8" fill="none" stroke="#a9a7a5" stroke-width="1"/></svg><svg class="b" style="left:427.5px;top:8.0px;" width="12" height="11" viewBox="0 0 12 11"><rect x=".6" y="0.2" width=".9" height="2" fill="#a9a7a5"/><path d="M3.6 1.2H11" stroke="#a9a7a5" stroke-width=".9"/><rect x=".6" y="4.2" width=".9" height="2" fill="#a9a7a5"/><path d="M3.6 5.2H11" stroke="#a9a7a5" stroke-width=".9"/><rect x=".6" y="8.2" width=".9" height="2" fill="#a9a7a5"/><path d="M3.6 9.2H11" stroke="#a9a7a5" stroke-width=".9"/></svg><svg class="b" style="left:443.0px;top:12.5px;" width="4" height="4" viewBox="0 0 4 4"><path d="M0.5 0.8 L2 3 L3.5 0.8" fill="none" stroke="#a9a7a5" stroke-width="1"/></svg><div class="b" style="left:453.0px;top:7.0px;width:1.0px;height:12.0px;background:#dddbd9;"></div><svg class="b" style="left:458.0px;top:8.0px;" width="11" height="11" viewBox="0 0 11 11"><path d="M0 .8H10.5M5 4H10.5M5 7H10.5M0 10.2H10.5" stroke="#a9a7a5" stroke-width=".9"/><path d="M3.6 5.5H.6M2 4L.5 5.5L2 7" stroke="#a9a7a5" stroke-width=".8" fill="none"/></svg><svg class="b" style="left:474.0px;top:8.0px;" width="11" height="11" viewBox="0 0 11 11"><path d="M0 .8H10.5M5 4H10.5M5 7H10.5M0 10.2H10.5" stroke="#a9a7a5" stroke-width=".9"/><path d="M.4 5.5H3.4M2 4L3.5 5.5L2 7" stroke="#a9a7a5" stroke-width=".8" fill="none"/></svg><div class="b" style="left:489.0px;top:7.0px;width:1.0px;height:12.0px;background:#dddbd9;"></div><svg class="b" style="left:494.0px;top:8.0px;" width="12" height="11" viewBox="0 0 12 11"><path d="M5 .8H11.5M5 4H11.5M5 7H11.5M5 10.2H11.5" stroke="#a9a7a5" stroke-width=".9"/><path d="M2 .6V10.4M.5 2.2L2 .6L3.5 2.2M.5 8.8L2 10.4L3.5 8.8" stroke="#a9a7a5" stroke-width=".8" fill="none"/></svg><svg class="b" style="left:508.5px;top:12.5px;" width="4" height="4" viewBox="0 0 4 4"><path d="M0.5 0.8 L2 3 L3.5 0.8" fill="none" stroke="#a9a7a5" stroke-width="1"/></svg><svg class="b" style="left:402.0px;top:29.5px;" width="12" height="13.4" viewBox="0 0 12 13.4"><path d="M0 0.6H10" stroke="#a9a7a5" stroke-width=".9"/><path d="M0 3.7H7" stroke="#a9a7a5" stroke-width=".9"/><path d="M0 6.8H10" stroke="#a9a7a5" stroke-width=".9"/><path d="M0 9.9H7" stroke="#a9a7a5" stroke-width=".9"/></svg><svg class="b" style="left:418.0px;top:29.5px;" width="12" height="13.4" viewBox="0 0 12 13.4"><path d="M0 0.6H10" stroke="#a9a7a5" stroke-width=".9"/><path d="M1.8 3.7H8.3" stroke="#a9a7a5" stroke-width=".9"/><path d="M0 6.8H10" stroke="#a9a7a5" stroke-width=".9"/><path d="M1.8 9.9H8.3" stroke="#a9a7a5" stroke-width=".9"/></svg><svg class="b" style="left:434.0px;top:29.5px;" width="12" height="13.4" viewBox="0 0 12 13.4"><path d="M0 0.6H10" stroke="#a9a7a5" stroke-width=".9"/><path d="M3 3.7H10" stroke="#a9a7a5" stroke-width=".9"/><path d="M0 6.8H10" stroke="#a9a7a5" stroke-width=".9"/><path d="M3 9.9H10" stroke="#a9a7a5" stroke-width=".9"/></svg><svg class="b" style="left:450.0px;top:29.5px;" width="12" height="13.4" viewBox="0 0 12 13.4"><path d="M0 0.6H10" stroke="#a9a7a5" stroke-width=".9"/><path d="M0 3.7H10" stroke="#a9a7a5" stroke-width=".9"/><path d="M0 6.8H10" stroke="#a9a7a5" stroke-width=".9"/><path d="M0 9.9H10" stroke="#a9a7a5" stroke-width=".9"/></svg><div class="b" style="left:464.5px;top:27.0px;width:1.0px;height:13.0px;background:#dddbd9;"></div><svg class="b" style="left:471.0px;top:31.0px;" width="9" height="7" viewBox="0 0 9 7"><path d="M0 .8H3.6M5.4 .8H9M0 3.4H3.6M5.4 3.4H9M0 6H3.6M5.4 6H9" stroke="#c4c2c0" stroke-width=".9"/></svg><svg class="b" style="left:484.0px;top:33.5px;" width="4" height="4" viewBox="0 0 4 4"><path d="M0.5 0.8 L2 3 L3.5 0.8" fill="none" stroke="#a9a7a5" stroke-width="1"/></svg><svg class="b" style="left:520.0px;top:2.0px;" width="8" height="12" viewBox="0 0 8 12"><path d="M2 .8V10.6M.4 2.4L2 .8L3.6 2.4M5.8 1.2V11M4.2 9.4L5.8 11L7.4 9.4" stroke="#a9a7a5" stroke-width=".8" fill="none"/></svg><span class="t" style="left:531.5px;top:5.0px;font-size:8.60px;transform:scaleX(0.9118);transform-origin:0 50%;color:#a9a7a5;">Text Direction</span><svg class="b" style="left:581.5px;top:7.0px;" width="4" height="4" viewBox="0 0 4 4"><path d="M0.5 0.8 L2 3 L3.5 0.8" fill="none" stroke="#a9a7a5" stroke-width="1"/></svg><svg class="b" style="left:519.0px;top:19.5px;" width="10" height="9" viewBox="0 0 10 9"><path d="M2.6 .6H.6V8.4H2.6M7.4 .6H9.4V8.4H7.4M2.6 4.5H7.4M5 1.2V7.8" stroke="#a9a7a5" stroke-width=".8" fill="none"/></svg><span class="t" style="left:531.5px;top:21.0px;font-size:8.60px;transform:scaleX(0.9157);transform-origin:0 50%;color:#a9a7a5;">Align Text</span><svg class="b" style="left:568.0px;top:23.0px;" width="4" height="4" viewBox="0 0 4 4"><path d="M0.5 0.8 L2 3 L3.5 0.8" fill="none" stroke="#a9a7a5" stroke-width="1"/></svg><svg class="b" style="left:519.0px;top:35.5px;" width="11" height="9" viewBox="0 0 11 9"><path d="M.4 1.2H5.4M1.2 3.6H4.6" stroke="#a9a7a5" stroke-width=".8"/><rect x="3.6" y="4.8" width="6.8" height="3.6" fill="none" stroke="#a9a7a5" stroke-width=".8"/><path d="M1.2 6.6H3.6" stroke="#a9a7a5" stroke-width=".8"/></svg><span class="t" style="left:531.5px;top:37.0px;font-size:8.60px;transform:scaleX(0.9080);transform-origin:0 50%;color:#a9a7a5;">Convert to SmartArt</span><svg class="b" style="left:603.5px;top:39.0px;" width="4" height="4" viewBox="0 0 4 4"><path d="M0.5 0.8 L2 3 L3.5 0.8" fill="none" stroke="#a9a7a5" stroke-width="1"/></svg><span class="t" style="left:483.0px;top:53.1px;font-size:8.40px;transform:scaleX(0.9049);transform-origin:0 50%;color:#5a5856;">Paragraph</span><svg class="b" style="left:610.5px;top:53.5px;" width="6" height="6" viewBox="0 0 6 6"><path d="M0.5 4V0.5H4M2.5 2.5L5.5 5.5M5.5 3V5.5H3" fill="none" stroke="#9a9896" stroke-width=".8"/></svg><div class="b" style="left:617.0px;top:2.0px;width:1.0px;height:56.0px;background:#d2d0ce;"></div><svg class="b" style="left:624.0px;top:2.0px;" width="92" height="41" viewBox="0 0 92 41"><rect x=".5" y=".5" width="81" height="40" fill="#fff" stroke="#e1dfdd" stroke-width="1"/><rect x="82" y=".5" width="9.5" height="40" fill="#f6f5f4" stroke="#e1dfdd" stroke-width="1"/><path d="M82 12.5H91.5M82 27H91.5" stroke="#e1dfdd"/><path d="M85 7.2L86.8 5.4L88.6 7.2" fill="none" stroke="#c8c6c4" stroke-width=".8"/><path d="M85 18.6L86.8 20.4L88.6 18.6" fill="none" stroke="#605e5c" stroke-width=".9"/><path d="M85 32.5H88.6M85 34.2L86.8 36L88.6 34.2" fill="none" stroke="#605e5c" stroke-width=".8"/><rect x="3.5" y="3.5" width="8.6" height="6.6" fill="#fff" stroke="#2b7cd3" stroke-width=".9"/><path d="M6 9L7.8 4.6L9.6 9M6.7 7.4H8.9" stroke="#2b7cd3" stroke-width=".7" fill="none"/><path d="M16.5 2.5L25.5 10.5" stroke="#484644" stroke-width=".9" fill="none"/><path d="M29.5 2.5L38.5 10.5M38.5 7.6V10.5H35.4" stroke="#484644" stroke-width=".9" fill="none"/><rect x="43" y="3.2" width="10.4" height="7" stroke="#484644" stroke-width=".9" fill="none"/><ellipse cx="61.4" cy="6.7" rx="5.3" ry="3.6" stroke="#484644" stroke-width=".9" fill="none"/><rect x="69.5" y="3.2" width="10" height="7" stroke="#484644" stroke-width=".9" fill="none"/><path d="M3 24.5L8 15.5L13 24.5Z" stroke="#484644" stroke-width=".9" fill="none"/><path d="M16 15.5H20V24.5H24" stroke="#484644" stroke-width=".9" fill="none"/><path d="M28 15.5H33V24.5H37.5M35.6 22.6L37.6 24.5L35.6 26.4" stroke="#484644" stroke-width=".9" fill="none"/><path d="M42.5 18.2H48V15.5L53 20L48 24.5V21.8H42.5Z" stroke="#484644" stroke-width=".9" fill="none"/><path d="M59.2 15.2H63.6V20.4H66.2L61.4 25L56.6 20.4H59.2Z" stroke="#484644" stroke-width=".9" fill="none"/><path d="M69.5 15.5H76.5L79.5 18.5V24.5H69.5Z" stroke="#484644" stroke-width=".9" fill="none"/><path d="M4 30C8 28 11 31 7 33.5C3 36 6 39 12 36.5" stroke="#484644" stroke-width=".9" fill="none"/><path d="M16 30.5C22 30.5 25 33.5 25.5 38.5" stroke="#484644" stroke-width=".9" fill="none"/><path d="M28.5 36.5C31 28 34 28 37.5 38" stroke="#484644" stroke-width=".9" fill="none"/><path d="M49.5 29.5C47.4 29.5 47.8 31 47.8 32.4C47.8 33.5 47.2 34 46.2 34C47.2 34 47.8 34.5 47.8 35.6C47.8 37 47.4 38.5 49.5 38.5" stroke="#484644" stroke-width=".9" fill="none"/><path d="M58.5 29.5C60.6 29.5 60.2 31 60.2 32.4C60.2 33.5 60.8 34 61.8 34C60.8 34 60.2 34.5 60.2 35.6C60.2 37 60.6 38.5 58.5 38.5" stroke="#484644" stroke-width=".9" fill="none"/><path d="M74.5 29L75.9 32.6L79.6 32.8L76.7 35.2L77.7 38.8L74.5 36.8L71.3 38.8L72.3 35.2L69.4 32.8L73.1 32.6Z" stroke="#484644" stroke-width=".9" fill="none"/></svg><svg class="b" style="left:722.0px;top:2.0px;" width="21" height="21" viewBox="0 0 21 21"><rect x="4.5" y="4.5" width="11" height="11" fill="#f8d58c" stroke="#e2a33c" stroke-width="1"/><rect x="1" y="1" width="7" height="7" fill="#fff" stroke="#605e5c" stroke-width="1"/><rect x="12.5" y="12.5" width="7" height="7" fill="#fff" stroke="#605e5c" stroke-width="1"/></svg><span class="t" style="left:719.0px;top:27.0px;font-size:8.60px;transform:scaleX(0.8988);transform-origin:0 50%;color:#3c3c3c;">Arrange</span><svg class="b" style="left:730.0px;top:39.5px;" width="5" height="4" viewBox="0 0 5 4"><path d="M0.5 0.8 L2.5 3 L4.5 0.8" fill="none" stroke="#666" stroke-width="1"/></svg><svg class="b" style="left:753.0px;top:2.0px;" width="22" height="21" viewBox="0 0 22 21"><rect x="1" y="1" width="18" height="18" fill="#ecebf0" stroke="#d0cecc" stroke-width="1"/><path d="M9 18.5L17.5 8.5L19.5 10L12 19.5Z" fill="#dad8d6" stroke="#bcbab8" stroke-width=".8"/></svg><span class="t" style="left:753.0px;top:27.0px;font-size:8.60px;transform:scaleX(0.9325);transform-origin:0 50%;color:#a9a7a5;">Quick</span><span class="t" style="left:750.5px;top:37.5px;font-size:8.60px;transform:scaleX(0.8540);transform-origin:0 50%;color:#a9a7a5;">Styles</span><svg class="b" style="left:772.5px;top:39.5px;" width="4" height="4" viewBox="0 0 4 4"><path d="M0.5 0.8 L2 3 L3.5 0.8" fill="none" stroke="#a9a7a5" stroke-width="1"/></svg><svg class="b" style="left:781.0px;top:1.5px;" width="11" height="12" viewBox="0 0 11 12"><path d="M3.4 6.4L6 1.6L8.6 6.4Z" fill="none" stroke="#a9a7a5" stroke-width=".8"/><path d="M1.6 7.4H9.6" stroke="#a9a7a5" stroke-width=".8"/><path d="M.6 10H10.4" stroke="#c2c0be" stroke-width="1.8"/></svg><span class="t" style="left:794.0px;top:4.7px;font-size:8.60px;transform:scaleX(0.8890);transform-origin:0 50%;color:#a9a7a5;">Shape Fill</span><svg class="b" style="left:830.0px;top:6.6px;" width="4" height="4" viewBox="0 0 4 4"><path d="M0.5 0.8 L2 3 L3.5 0.8" fill="none" stroke="#a9a7a5" stroke-width="1"/></svg><svg class="b" style="left:781.0px;top:17.0px;" width="11" height="12" viewBox="0 0 11 12"><rect x="1.4" y="1.6" width="6.8" height="5.6" fill="none" stroke="#a9a7a5" stroke-width=".8"/><path d="M5 6L9.4 1.4" stroke="#a9a7a5" stroke-width="1"/><path d="M.6 10H10.4" stroke="#c2c0be" stroke-width="1.8"/></svg><span class="t" style="left:794.0px;top:19.7px;font-size:8.60px;transform:scaleX(0.8990);transform-origin:0 50%;color:#a9a7a5;">Shape Outline</span><svg class="b" style="left:845.5px;top:21.6px;" width="4" height="4" viewBox="0 0 4 4"><path d="M0.5 0.8 L2 3 L3.5 0.8" fill="none" stroke="#a9a7a5" stroke-width="1"/></svg><svg class="b" style="left:781.0px;top:32.5px;" width="11" height="11" viewBox="0 0 11 11"><path d="M1 6.2L3.6 2H9.4L6.8 6.2Z" fill="none" stroke="#a9a7a5" stroke-width=".8"/><path d="M1 6.2V8.2H6.8L9.4 4" fill="none" stroke="#a9a7a5" stroke-width=".8"/></svg><span class="t" style="left:794.0px;top:34.7px;font-size:8.60px;transform:scaleX(0.8616);transform-origin:0 50%;color:#a9a7a5;">Shape Effects</span><svg class="b" style="left:842.5px;top:36.6px;" width="4" height="4" viewBox="0 0 4 4"><path d="M0.5 0.8 L2 3 L3.5 0.8" fill="none" stroke="#a9a7a5" stroke-width="1"/></svg><span class="t" style="left:718.0px;top:53.1px;font-size:8.40px;letter-spacing:-0.19px;color:#5a5856;">Drawing</span><svg class="b" style="left:850.5px;top:53.5px;" width="6" height="6" viewBox="0 0 6 6"><path d="M0.5 4V0.5H4M2.5 2.5L5.5 5.5M5.5 3V5.5H3" fill="none" stroke="#9a9896" stroke-width=".8"/></svg><div class="b" style="left:858.0px;top:2.0px;width:1.0px;height:56.0px;background:#d2d0ce;"></div><svg class="b" style="left:865.0px;top:1.5px;" width="12" height="12" viewBox="0 0 12 12"><circle cx="7.4" cy="4.4" r="3.4" fill="none" stroke="#484644" stroke-width="1"/><path d="M5 7L1 11" stroke="#484644" stroke-width="1.2"/></svg><span class="t" style="left:878.5px;top:4.4px;font-size:8.80px;transform:scaleX(0.8762);transform-origin:0 50%;color:#3c3c3c;">Find</span><svg class="b" style="left:865.0px;top:17.5px;" width="12" height="12" viewBox="0 0 12 12"><path d="M3.8 2.2C1.6 2.6 .8 4.8 2 6.6M1 5.2L2 6.8L3.6 6" fill="none" stroke="#2b7cd3" stroke-width=".8"/><text x="5.4" y="5.2" font-size="5.5" fill="#484644" font-family="Liberation Sans,sans-serif">b</text><text x="6.6" y="11" font-size="5.5" fill="#2b7cd3" font-family="Liberation Sans,sans-serif">c</text><path d="M3.2 8.4C3.6 10.4 5 10.8 6 10.4" fill="none" stroke="#2b7cd3" stroke-width=".8"/></svg><span class="t" style="left:878.5px;top:19.9px;font-size:8.80px;transform:scaleX(0.8362);transform-origin:0 50%;color:#3c3c3c;">Replace</span><svg class="b" style="left:912.0px;top:22.0px;" width="5" height="4" viewBox="0 0 5 4"><path d="M0.5 0.8 L2.5 3 L4.5 0.8" fill="none" stroke="#666" stroke-width="1"/></svg><svg class="b" style="left:866.5px;top:32.0px;" width="9" height="12" viewBox="0 0 9 12"><path d="M1 .8V9.4L3.2 7.4L4.8 11L6.2 10.4L4.6 6.8H7.4Z" fill="#fff" stroke="#484644" stroke-width=".8"/></svg><span class="t" style="left:878.5px;top:34.9px;font-size:8.80px;transform:scaleX(0.8995);transform-origin:0 50%;color:#3c3c3c;">Select</span><svg class="b" style="left:901.8px;top:37.0px;" width="5" height="4" viewBox="0 0 5 4"><path d="M0.5 0.8 L2.5 3 L4.5 0.8" fill="none" stroke="#666" stroke-width="1"/></svg><span class="t" style="left:880.0px;top:53.1px;font-size:8.40px;transform:scaleX(0.9344);transform-origin:0 50%;color:#5a5856;">Editing</span><div class="b" style="left:925.0px;top:2.0px;width:1.0px;height:56.0px;background:#d2d0ce;"></div><svg class="b" style="left:945.0px;top:1.0px;" width="19" height="21" viewBox="0 0 19 21"><path d="M2.5 1H10.5L14 4.5V15.5H2.5Z" fill="#f7f9ff" stroke="#6b8fd8" stroke-width="1"/><path d="M5 11C7 9 8 6.5 7.6 4.6C9 8 10 9.4 12 9.8C9.6 9.8 7 10.4 5 11Z" fill="none" stroke="#6b8fd8" stroke-width=".7"/><path d="M10.4 16.4L14.6 12.2C16 11 17.8 12.8 16.6 14.2L12.6 18.2C11.2 19.4 9.4 17.6 10.4 16.4Z" fill="#f3f2f1" stroke="#6b8fd8" stroke-width="1"/></svg><span class="t" style="left:942.5px;top:27.0px;font-size:8.60px;transform:scaleX(0.8716);transform-origin:0 50%;color:#3c3c3c;">Create</span><span class="t" style="left:944.0px;top:37.3px;font-size:8.60px;transform:scaleX(0.8001);transform-origin:0 50%;color:#3c3c3c;">a PDF</span><span class="t" style="left:928.0px;top:53.1px;font-size:8.40px;transform:scaleX(0.9163);transform-origin:0 50%;color:#5a5856;">Adobe Acrobat</span><div class="b" style="left:981.0px;top:2.0px;width:1.0px;height:56.0px;background:#d2d0ce;"></div><svg class="b" style="left:1256.5px;top:54.5px;" width="8" height="5" viewBox="0 0 8 5"><path d="M.6 4.2L4 .9L7.4 4.2" fill="none" stroke="#484644" stroke-width="1"/></svg></div>
<div id="pqat"><svg class="b" style="left:4.0px;top:5.5px;" width="12" height="12" viewBox="0 0 12 12"><path d="M.8 .8H9.4L11.2 2.6V11.2H.8Z" fill="#fbf4fc" stroke="#9b4fb0" stroke-width="1.2"/><rect x="2.8" y=".8" width="5.8" height="3.6" fill="#c98bd6" stroke="#9b4fb0" stroke-width=".8"/><rect x="2.8" y="7" width="6.4" height="4.2" fill="#fff" stroke="#9b4fb0" stroke-width=".8"/></svg><svg class="b" style="left:24.5px;top:5.5px;" width="11" height="12" viewBox="0 0 11 12"><path d="M.8 1V5.2H5M1 5C3 1.4 9 1.4 9.4 5.6C9.6 8.4 7 9.8 3.4 11.2" fill="none" stroke="#a3a19f" stroke-width="1"/></svg><svg class="b" style="left:38.5px;top:9.5px;" width="4" height="4" viewBox="0 0 4 4"><path d="M0.5 0.8 L2 3 L3.5 0.8" fill="none" stroke="#c2c0be" stroke-width="1"/></svg><svg class="b" style="left:49.5px;top:5.5px;" width="12" height="12" viewBox="0 0 12 12"><path d="M6.4 1.4C10.6 1.6 11.6 7 8.6 9.6C5.6 12 1.2 10 1 6C.9 4.4 1.6 3 2.8 2" fill="none" stroke="#a3a19f" stroke-width="1"/><path d="M6.6 .4V3.4H3.6" fill="none" stroke="#a3a19f" stroke-width="1" transform="rotate(-20 6 2)"/></svg><svg class="b" style="left:68.5px;top:5.5px;" width="12" height="12" viewBox="0 0 12 12"><rect x="1.4" y="1.4" width="9.2" height="6" fill="#fff" stroke="#484644" stroke-width="1"/><path d="M.4 1.2H11.6M6 7.4V10.8M3.4 11H8.6" stroke="#484644" stroke-width="1"/><path d="M6 2.4V6M4.4 4.4H7.6" stroke="#484644" stroke-width=".7"/></svg><svg class="b" style="left:89.0px;top:5.5px;" width="10" height="12" viewBox="0 0 10 12"><path d="M1 .8H5.6L8.8 4V11.2H1Z" fill="#fff" stroke="#484644" stroke-width="1"/><path d="M5.4 1V4.2H8.6" fill="none" stroke="#484644" stroke-width=".8"/></svg><svg class="b" style="left:110.0px;top:8.5px;" width="6" height="6" viewBox="0 0 6 6"><path d="M.6 .8H5.4" stroke="#605e5c" stroke-width=".9"/><path d="M.8 2.6H5.2L3 5Z" fill="#605e5c"/></svg></div>
<div id="thumbs"><span class="t" style="left:7.2px;top:141.4px;font-size:9.60px;color:#6a6a6a;">1</span><span class="t" style="left:7.2px;top:248.4px;font-size:9.60px;color:#6a6a6a;">2</span><span class="t" style="left:7.2px;top:355.9px;font-size:9.60px;color:#c8644c;">3</span><span class="t" style="left:7.2px;top:462.9px;font-size:9.60px;color:#6a6a6a;">4</span><span class="t" style="left:7.2px;top:569.9px;font-size:9.60px;color:#6a6a6a;">5</span><div class="th " style="top:142px"><div class="full"><div class="wood"></div><div class="clip" style="top:0;height:501px"></div><div class="pp" style="left:158px;top:103px;width:570px;height:298px"><i></i></div><div class="ttl" style="top:136px;font-size:25px;line-height:26px;color:#262626">IMPLEMENTASI PEMBENTUKAN<br><span style="color:#9d0b2e">GUGUS TUGAS PENCEGAHAN DAN<br>PENANGANAN PORNOGRAFI</span><br>DI DAERAH</div><div class="ln" style="left:200px;width:492px;top:256px"></div><div class="tx" style="top:266px;font-size:19px;font-style:italic;color:#2b6cc4">Imam Syaukani</div><div class="tx" style="top:290px;font-size:16px">Kepala Biro Hukum dan Kerja Sama Luar Negeri</div><div class="tx" style="top:312px;font-size:16px;color:#111">Sekretaris Gugus Tugas Pencegahan dan Penanganan Pornografi</div></div></div><div class="th " style="top:249px"><div class="full"><div class="wood"></div><div class="pp"><i></i></div><div class="clip" style="top:0;height:54px"></div><div class="clip" style="top:445px;height:56px"></div><div class="ttl" style="top:98px;font-size:40px">Apa itu Gugus Tugas?</div><div class="ln"></div><div class="tx" style="top:228px;font-size:20px;line-height:26px">Gugus Tugas Pencegahan dan Penanganan Pornografi yang<br>selanjutnya disebut Gugus Tugas adalah lembaga koordinatif yang<br>bertugas mengoordinasikan upaya pencegahan dan penanganan<br>pornografi.</div><div class="tx" style="top:366px;font-size:14px;line-height:17px;color:#9d0b2e">Perpres No. 25 Tahun 2012 tentang Gugus Tugas<br>Pencegahan dan Penanganan Pornografi</div></div></div><div class="thsel"></div><div class="th t3" style="top:356.5px"><div class="full"><div class="wood"></div><div class="s3"><svg class="grain" width="892" height="501" viewBox="0 0 892 501" preserveAspectRatio="none"><defs><filter id="gh" x="0" y="0" width="100%" height="100%"><feTurbulence type="fractalNoise" baseFrequency="0.012 0.26" numOctaves="3" seed="7"/><feColorMatrix type="matrix" values="0 0 0 0 0.13  0 0 0 0 0.05  0 0 0 0 0.01  4.2 0 0 0 -2.0"/></filter></defs><g transform="rotate(-4 446 250)"><rect x="-60" y="-60" width="1012" height="621" filter="url(#gh)" opacity=".85"/></g></svg><div class="pp"><i></i></div><div class="clip" style="top:0;height:54px"><i style="bottom:-1px"></i></div><div class="clip" style="top:445px;height:56px"><i style="top:-1px"></i></div><div class="stitle"><div class="ln1" style="left:146.3px;top:59.1px;font-size:32.60px;letter-spacing:0.548px;">Dasar Hukum <span class="sq">Pembentukan</span> <span class="sq">Gugus</span> <span class="sq">Tugas</span></div><div class="ln1" style="left:160.6px;top:94.8px;font-size:32.60px;letter-spacing:0.249px;"><span class="sq">Pencegahan</span> dan <span class="sq">Penanganan</span> <span class="sq">Pornografi</span></div><div class="ln1" style="left:237.0px;top:130.6px;font-size:32.60px;letter-spacing:0.257px;"><span class="sq">Provinsi</span> dan <span class="sq">Kabupaten</span>/Kota</div></div><div class="ln"></div><div class="body"><div class="ln1" style="left:231.0px;top:200.6px;font-size:20.50px;letter-spacing:-0.121px;">Pasal 7</div><div class="ln1" style="left:604.0px;top:200.6px;font-size:20.50px;letter-spacing:-0.049px;">Pasal 8</div><div class="ln1" style="left:124.0px;top:224.0px;font-size:21.00px;letter-spacing:0.312px;">Di <span class="sq">Provinsi</span> <b class="sq">dapat</b> <span class="sq">dibentuk</span> <span class="sq">Gugus</span></div><div class="ln1" style="left:124.0px;top:248.1px;font-size:21.00px;letter-spacing:0.161px;"><span class="sq">Tugas</span> <span class="sq">Provinsi</span> <span class="sq">sesuai</span> <span class="sq">dengan</span></div><div class="ln1" style="left:124.0px;top:272.2px;font-size:21.00px;letter-spacing:0.354px;"><span class="sq">ketentuan</span> <span class="sq">peraturan</span> <span class="sq">perundang</span></div><div class="ln1" style="left:124.0px;top:296.2px;font-size:21.00px;letter-spacing:0.157px;"><span class="sq">undangan</span>.</div><div class="ln1" style="left:124.0px;top:320.3px;font-size:21.00px;letter-spacing:0.232px;"><span class="sq">Gugus</span> <span class="sq">Tugas</span> <span class="sq">Provinsi</span> <span class="sq">berada</span> di</div><div class="ln1" style="left:124.0px;top:344.4px;font-size:21.00px;letter-spacing:0.178px;"><span class="sq">bawah</span> dan <span class="sq">bertanggung</span> <span class="sq">jawab</span></div><div class="ln1" style="left:124.0px;top:368.4px;font-size:21.00px;letter-spacing:0.199px;"><span class="sq">kepada</span> <span class="sq">gubernur</span>.</div><div class="ln1" style="left:492.0px;top:224.0px;font-size:21.00px;letter-spacing:0.577px;">Di <span class="sq">Kabupaten</span>/Kota <b class="sq">dapat</b> <span class="sq">dibentuk</span></div><div class="ln1" style="left:492.0px;top:248.1px;font-size:21.00px;letter-spacing:0.594px;"><span class="sq">Gugus</span> <span class="sq">Tugas</span> <span class="sq">Kabupaten</span>/Kota</div><div class="ln1" style="left:492.0px;top:272.2px;font-size:21.00px;letter-spacing:0.227px;"><span class="sq">sesuai</span> <span class="sq">dengan</span> <span class="sq">ketentuan</span> <span class="sq">peraturan</span></div><div class="ln1" style="left:492.0px;top:296.2px;font-size:21.00px;letter-spacing:0.320px;"><span class="sq">perundang-undangan</span>.</div><div class="ln1" style="left:492.0px;top:320.3px;font-size:21.00px;letter-spacing:0.594px;"><span class="sq">Gugus</span> <span class="sq">Tugas</span> <span class="sq">Kabupaten</span>/Kota</div><div class="ln1" style="left:492.0px;top:344.4px;font-size:21.00px;letter-spacing:0.249px;"><span class="sq">berada</span> di <span class="sq">bawah</span> dan <span class="sq">bertanggung</span></div><div class="ln1" style="left:492.0px;top:368.4px;font-size:21.00px;letter-spacing:0.162px;"><span class="sq">jawab</span> <span class="sq">kepada</span> <span class="sq">bupati</span>/<span class="sq">wali</span> <span class="sq">kota</span>.</div><div class="ln1" style="left:85.3px;top:224.0px;font-size:21.00px;letter-spacing:-0.296px;">(1)</div><div class="ln1" style="left:85.3px;top:320.3px;font-size:21.00px;letter-spacing:-0.296px;">(2)</div><div class="ln1" style="left:453.5px;top:224.0px;font-size:21.00px;letter-spacing:-0.296px;">(1)</div><div class="ln1" style="left:453.5px;top:320.3px;font-size:21.00px;letter-spacing:-0.296px;">(2)</div></div><div class="sfoot"><div class="ln1" style="left:295.8px;top:404.0px;font-size:13.60px;letter-spacing:0.377px;"><span class="sq">Perpres</span> No. 25 <span class="sq">Tahun</span> 2012 <span class="sq">tentang</span> <span class="sq">Gugus</span> <span class="sq">Tugas</span></div><div class="ln1" style="left:322.3px;top:420.2px;font-size:13.60px;letter-spacing:0.354px;"><span class="sq">Pencegahan</span> dan <span class="sq">Penanganan</span> <span class="sq">Pornografi</span></div></div></div></div></div><div class="th " style="top:463.5px"><div class="full"><div class="wood"></div><div class="pp"><i></i></div><div class="clip" style="top:0;height:54px"></div><div class="clip" style="top:445px;height:56px"></div><div class="ttl" style="top:98px;font-size:40px">Pedoman Pembentukan</div><div class="ln"></div><svg style="position:absolute;left:404px;top:196px" width="86" height="90" viewBox="0 0 86 90"><path d="M43 6C30 18 8 14 4 40C12 36 16 44 22 40C20 54 30 66 43 84C56 66 66 54 64 40C70 44 74 36 82 40C78 14 56 18 43 6Z" fill="#c8a040"/><path d="M31 30H55V52C55 60 43 66 43 66C43 66 31 60 31 52Z" fill="#b03028"/><path d="M31 41H55" stroke="#222" stroke-width="3"/><path d="M24 74H62" stroke="#eee" stroke-width="6"/></svg><div class="tx" style="top:284px;font-size:22.5px;line-height:26px;font-weight:normal;letter-spacing:.3px">KEPUTUSAN MENTERI AGAMA REPUBLIK INDONESIA<br><span style="font-size:17px">NOMOR 438 TAHUN 2013<br>TENTANG</span><br><span style="font-size:20.5px;font-weight:bold">PEDOMAN PEMBENTUKAN GUGUS TUGAS PENCEGAHAN DAN<br>PENANGANAN PORNOGRAFI PROVINSI DAN KABUPATEN/KOTA</span></div></div></div><div class="th " style="top:570.5px"><div class="full"><div class="wood"></div><div class="pp"><i></i></div><div class="clip" style="top:0;height:54px"></div><div class="clip" style="top:445px;height:56px"></div><div class="ttl" style="top:98px;font-size:34px">Materi Muatan</div><div class="ln"></div><div class="mm" style="left:102px;top:224px;background:#f6ddd0;HH"><em style="background:#e0202a">1</em>Ketentuan<br>Umum</div><div class="mm" style="left:282px;top:224px;background:#d8e2f0;HH"><em style="background:#e0202a">2</em>Kedudukan<br>dan Tugas</div><div class="mm" style="left:460px;top:224px;background:#f2cfd2;HH"><em style="background:#e0202a">3</em>Organisasi</div><div class="mm" style="left:634px;top:224px;background:#d8e8f4;HH"><em style="background:#e0202a">4</em>Tata Kerja<br>Gugus Tugas</div><div class="mm" style="left:102px;top:328px;background:#f6ddd0;HH"><em style="background:#6a3aa8">5</em>Kesekretariatan</div><div class="mm" style="left:282px;top:314px;background:#8fc4f2;height:84px"><em style="background:#6a3aa8">6</em>Pemantauan,<br>Evaluasi, dan<br>Pelaporan</div><div class="mm" style="left:460px;top:328px;background:#fcf6c6;HH"><em style="background:#6a3aa8">7</em>Pembiayaan</div><div class="mm" style="left:634px;top:328px;background:#d8f0f4;HH"><em style="background:#6a3aa8">8</em>Rencana Aksi<br>Daerah</div></div></div><svg class="b" style="left:78.6px;top:404.6px;" width="8.4" height="13" viewBox="0 0 10.5 16.5"><path d="M.7 .7V13.2L3.8 10.4L6 15.6L8 14.7L5.8 9.6H9.8Z" fill="#fff" stroke="#222" stroke-width="1"/></svg><div class="b" style="left:204.5px;top:129.0px;width:9.5px;height:536.0px;background:#dddddf;"></div><div class="b" style="left:204.5px;top:131.3px;width:9.3px;height:8.8px;background:#fff;"></div><div class="b" style="left:214.0px;top:129.0px;width:3.0px;height:536.0px;background:#ececec;"></div><svg class="b" style="left:206.5px;top:133.5px;" width="6" height="4" viewBox="0 0 6 4"><path d="M.4 3.6L3 .6L5.6 3.6Z" fill="#7a7a7a"/></svg><div class="b" style="left:204.5px;top:141.0px;width:9.3px;height:162.0px;background:#fff;"></div><div class="b" style="left:205.0px;top:661.5px;width:8.5px;height:4.0px;background:#fff;"></div><div class="b" style="left:217.0px;top:129.0px;width:1.0px;height:536.0px;background:#dcdcdc;"></div></div><div id="rulers"><div class="b" style="left:0.0px;top:129.0px;width:1270.0px;height:3.0px;background:#dcdcdc;"></div><div class="b" style="left:303.0px;top:132.3px;width:890.5px;height:8.7px;background:#fff;overflow:hidden"><span class="rn" style="left:23.9px;top:4.4px">16</span><b class="b" style="left:37.0px;top:2.4px;width:1px;height:4px;background:#8a8a8a"></b><b class="b" style="left:30.4px;top:4px;width:1px;height:1px;background:#8a8a8a"></b><b class="b" style="left:43.6px;top:4px;width:1px;height:1px;background:#8a8a8a"></b><span class="rn" style="left:50.2px;top:4.4px">15</span><b class="b" style="left:63.3px;top:2.4px;width:1px;height:4px;background:#8a8a8a"></b><b class="b" style="left:56.7px;top:4px;width:1px;height:1px;background:#8a8a8a"></b><b class="b" style="left:69.9px;top:4px;width:1px;height:1px;background:#8a8a8a"></b><span class="rn" style="left:76.4px;top:4.4px">14</span><b class="b" style="left:89.6px;top:2.4px;width:1px;height:4px;background:#8a8a8a"></b><b class="b" style="left:83.0px;top:4px;width:1px;height:1px;background:#8a8a8a"></b><b class="b" style="left:96.1px;top:4px;width:1px;height:1px;background:#8a8a8a"></b><span class="rn" style="left:102.7px;top:4.4px">13</span><b class="b" style="left:115.8px;top:2.4px;width:1px;height:4px;background:#8a8a8a"></b><b class="b" style="left:109.3px;top:4px;width:1px;height:1px;background:#8a8a8a"></b><b class="b" style="left:122.4px;top:4px;width:1px;height:1px;background:#8a8a8a"></b><span class="rn" style="left:129.0px;top:4.4px">12</span><b class="b" style="left:142.1px;top:2.4px;width:1px;height:4px;background:#8a8a8a"></b><b class="b" style="left:135.5px;top:4px;width:1px;height:1px;background:#8a8a8a"></b><b class="b" style="left:148.7px;top:4px;width:1px;height:1px;background:#8a8a8a"></b><span class="rn" style="left:155.2px;top:4.4px">11</span><b class="b" style="left:168.4px;top:2.4px;width:1px;height:4px;background:#8a8a8a"></b><b class="b" style="left:161.8px;top:4px;width:1px;height:1px;background:#8a8a8a"></b><b class="b" style="left:174.9px;top:4px;width:1px;height:1px;background:#8a8a8a"></b><span class="rn" style="left:181.5px;top:4.4px">10</span><b class="b" style="left:194.6px;top:2.4px;width:1px;height:4px;background:#8a8a8a"></b><b class="b" style="left:188.1px;top:4px;width:1px;height:1px;background:#8a8a8a"></b><b class="b" style="left:201.2px;top:4px;width:1px;height:1px;background:#8a8a8a"></b><span class="rn" style="left:207.8px;top:4.4px">9</span><b class="b" style="left:220.9px;top:2.4px;width:1px;height:4px;background:#8a8a8a"></b><b class="b" style="left:214.3px;top:4px;width:1px;height:1px;background:#8a8a8a"></b><b class="b" style="left:227.5px;top:4px;width:1px;height:1px;background:#8a8a8a"></b><span class="rn" style="left:234.0px;top:4.4px">8</span><b class="b" style="left:247.2px;top:2.4px;width:1px;height:4px;background:#8a8a8a"></b><b class="b" style="left:240.6px;top:4px;width:1px;height:1px;background:#8a8a8a"></b><b class="b" style="left:253.7px;top:4px;width:1px;height:1px;background:#8a8a8a"></b><span class="rn" style="left:260.3px;top:4.4px">7</span><b class="b" style="left:273.4px;top:2.4px;width:1px;height:4px;background:#8a8a8a"></b><b class="b" style="left:266.9px;top:4px;width:1px;height:1px;background:#8a8a8a"></b><b class="b" style="left:280.0px;top:4px;width:1px;height:1px;background:#8a8a8a"></b><span class="rn" style="left:286.6px;top:4.4px">6</span><b class="b" style="left:299.7px;top:2.4px;width:1px;height:4px;background:#8a8a8a"></b><b class="b" style="left:293.1px;top:4px;width:1px;height:1px;background:#8a8a8a"></b><b class="b" style="left:306.3px;top:4px;width:1px;height:1px;background:#8a8a8a"></b><span class="rn" style="left:312.9px;top:4.4px">5</span><b class="b" style="left:326.0px;top:2.4px;width:1px;height:4px;background:#8a8a8a"></b><b class="b" style="left:319.4px;top:4px;width:1px;height:1px;background:#8a8a8a"></b><b class="b" style="left:332.6px;top:4px;width:1px;height:1px;background:#8a8a8a"></b><span class="rn" style="left:339.1px;top:4.4px">4</span><b class="b" style="left:352.3px;top:2.4px;width:1px;height:4px;background:#8a8a8a"></b><b class="b" style="left:345.7px;top:4px;width:1px;height:1px;background:#8a8a8a"></b><b class="b" style="left:358.8px;top:4px;width:1px;height:1px;background:#8a8a8a"></b><span class="rn" style="left:365.4px;top:4.4px">3</span><b class="b" style="left:378.5px;top:2.4px;width:1px;height:4px;background:#8a8a8a"></b><b class="b" style="left:372.0px;top:4px;width:1px;height:1px;background:#8a8a8a"></b><b class="b" style="left:385.1px;top:4px;width:1px;height:1px;background:#8a8a8a"></b><span class="rn" style="left:391.7px;top:4.4px">2</span><b class="b" style="left:404.8px;top:2.4px;width:1px;height:4px;background:#8a8a8a"></b><b class="b" style="left:398.2px;top:4px;width:1px;height:1px;background:#8a8a8a"></b><b class="b" style="left:411.4px;top:4px;width:1px;height:1px;background:#8a8a8a"></b><span class="rn" style="left:417.9px;top:4.4px">1</span><b class="b" style="left:431.1px;top:2.4px;width:1px;height:4px;background:#8a8a8a"></b><b class="b" style="left:424.5px;top:4px;width:1px;height:1px;background:#8a8a8a"></b><b class="b" style="left:437.6px;top:4px;width:1px;height:1px;background:#8a8a8a"></b><span class="rn" style="left:444.2px;top:4.4px">0</span><b class="b" style="left:457.3px;top:2.4px;width:1px;height:4px;background:#8a8a8a"></b><b class="b" style="left:450.8px;top:4px;width:1px;height:1px;background:#8a8a8a"></b><b class="b" style="left:463.9px;top:4px;width:1px;height:1px;background:#8a8a8a"></b><span class="rn" style="left:470.5px;top:4.4px">1</span><b class="b" style="left:483.6px;top:2.4px;width:1px;height:4px;background:#8a8a8a"></b><b class="b" style="left:477.0px;top:4px;width:1px;height:1px;background:#8a8a8a"></b><b class="b" style="left:490.2px;top:4px;width:1px;height:1px;background:#8a8a8a"></b><span class="rn" style="left:496.7px;top:4.4px">2</span><b class="b" style="left:509.9px;top:2.4px;width:1px;height:4px;background:#8a8a8a"></b><b class="b" style="left:503.3px;top:4px;width:1px;height:1px;background:#8a8a8a"></b><b class="b" style="left:516.4px;top:4px;width:1px;height:1px;background:#8a8a8a"></b><span class="rn" style="left:523.0px;top:4.4px">3</span><b class="b" style="left:536.1px;top:2.4px;width:1px;height:4px;background:#8a8a8a"></b><b class="b" style="left:529.6px;top:4px;width:1px;height:1px;background:#8a8a8a"></b><b class="b" style="left:542.7px;top:4px;width:1px;height:1px;background:#8a8a8a"></b><span class="rn" style="left:549.3px;top:4.4px">4</span><b class="b" style="left:562.4px;top:2.4px;width:1px;height:4px;background:#8a8a8a"></b><b class="b" style="left:555.8px;top:4px;width:1px;height:1px;background:#8a8a8a"></b><b class="b" style="left:569.0px;top:4px;width:1px;height:1px;background:#8a8a8a"></b><span class="rn" style="left:575.5px;top:4.4px">5</span><b class="b" style="left:588.7px;top:2.4px;width:1px;height:4px;background:#8a8a8a"></b><b class="b" style="left:582.1px;top:4px;width:1px;height:1px;background:#8a8a8a"></b><b class="b" style="left:595.3px;top:4px;width:1px;height:1px;background:#8a8a8a"></b><span class="rn" style="left:601.8px;top:4.4px">6</span><b class="b" style="left:615.0px;top:2.4px;width:1px;height:4px;background:#8a8a8a"></b><b class="b" style="left:608.4px;top:4px;width:1px;height:1px;background:#8a8a8a"></b><b class="b" style="left:621.5px;top:4px;width:1px;height:1px;background:#8a8a8a"></b><span class="rn" style="left:628.1px;top:4.4px">7</span><b class="b" style="left:641.2px;top:2.4px;width:1px;height:4px;background:#8a8a8a"></b><b class="b" style="left:634.7px;top:4px;width:1px;height:1px;background:#8a8a8a"></b><b class="b" style="left:647.8px;top:4px;width:1px;height:1px;background:#8a8a8a"></b><span class="rn" style="left:654.4px;top:4.4px">8</span><b class="b" style="left:667.5px;top:2.4px;width:1px;height:4px;background:#8a8a8a"></b><b class="b" style="left:660.9px;top:4px;width:1px;height:1px;background:#8a8a8a"></b><b class="b" style="left:674.1px;top:4px;width:1px;height:1px;background:#8a8a8a"></b><span class="rn" style="left:680.6px;top:4.4px">9</span><b class="b" style="left:693.8px;top:2.4px;width:1px;height:4px;background:#8a8a8a"></b><b class="b" style="left:687.2px;top:4px;width:1px;height:1px;background:#8a8a8a"></b><b class="b" style="left:700.3px;top:4px;width:1px;height:1px;background:#8a8a8a"></b><span class="rn" style="left:706.9px;top:4.4px">10</span><b class="b" style="left:720.0px;top:2.4px;width:1px;height:4px;background:#8a8a8a"></b><b class="b" style="left:713.5px;top:4px;width:1px;height:1px;background:#8a8a8a"></b><b class="b" style="left:726.6px;top:4px;width:1px;height:1px;background:#8a8a8a"></b><span class="rn" style="left:733.2px;top:4.4px">11</span><b class="b" style="left:746.3px;top:2.4px;width:1px;height:4px;background:#8a8a8a"></b><b class="b" style="left:739.7px;top:4px;width:1px;height:1px;background:#8a8a8a"></b><b class="b" style="left:752.9px;top:4px;width:1px;height:1px;background:#8a8a8a"></b><span class="rn" style="left:759.4px;top:4.4px">12</span><b class="b" style="left:772.6px;top:2.4px;width:1px;height:4px;background:#8a8a8a"></b><b class="b" style="left:766.0px;top:4px;width:1px;height:1px;background:#8a8a8a"></b><b class="b" style="left:779.1px;top:4px;width:1px;height:1px;background:#8a8a8a"></b><span class="rn" style="left:785.7px;top:4.4px">13</span><b class="b" style="left:798.8px;top:2.4px;width:1px;height:4px;background:#8a8a8a"></b><b class="b" style="left:792.3px;top:4px;width:1px;height:1px;background:#8a8a8a"></b><b class="b" style="left:805.4px;top:4px;width:1px;height:1px;background:#8a8a8a"></b><span class="rn" style="left:812.0px;top:4.4px">14</span><b class="b" style="left:825.1px;top:2.4px;width:1px;height:4px;background:#8a8a8a"></b><b class="b" style="left:818.5px;top:4px;width:1px;height:1px;background:#8a8a8a"></b><b class="b" style="left:831.7px;top:4px;width:1px;height:1px;background:#8a8a8a"></b><span class="rn" style="left:838.2px;top:4.4px">15</span><b class="b" style="left:851.4px;top:2.4px;width:1px;height:4px;background:#8a8a8a"></b><b class="b" style="left:844.8px;top:4px;width:1px;height:1px;background:#8a8a8a"></b><b class="b" style="left:858.0px;top:4px;width:1px;height:1px;background:#8a8a8a"></b><span class="rn" style="left:864.5px;top:4.4px">16</span><b class="b" style="left:5.5px;top:4px;width:1px;height:1px;background:#8a8a8a"></b><b class="b" style="left:12.3px;top:2.4px;width:1px;height:4px;background:#8a8a8a"></b><b class="b" style="left:18.7px;top:4px;width:1px;height:1px;background:#8a8a8a"></b><b class="b" style="left:870.0px;top:4px;width:1px;height:1px;background:#8a8a8a"></b><b class="b" style="left:876.5px;top:2.4px;width:1px;height:4px;background:#8a8a8a"></b><b class="b" style="left:883.0px;top:4px;width:1px;height:1px;background:#8a8a8a"></b></div><div class="b" style="left:222.0px;top:157.0px;width:8.5px;height:501.0px;background:#fff;overflow:hidden"><span class="vn" style="left:4.5px;top:13.0px">9</span><b class="b" style="left:2.5px;top:26.2px;width:4px;height:1px;background:#8a8a8a"></b><b class="b" style="left:4px;top:19.6px;width:1px;height:1px;background:#8a8a8a"></b><b class="b" style="left:4px;top:32.8px;width:1px;height:1px;background:#8a8a8a"></b><span class="vn" style="left:4.5px;top:39.4px">8</span><b class="b" style="left:2.5px;top:52.6px;width:4px;height:1px;background:#8a8a8a"></b><b class="b" style="left:4px;top:46.0px;width:1px;height:1px;background:#8a8a8a"></b><b class="b" style="left:4px;top:59.3px;width:1px;height:1px;background:#8a8a8a"></b><span class="vn" style="left:4.5px;top:65.9px">7</span><b class="b" style="left:2.5px;top:79.1px;width:4px;height:1px;background:#8a8a8a"></b><b class="b" style="left:4px;top:72.5px;width:1px;height:1px;background:#8a8a8a"></b><b class="b" style="left:4px;top:85.7px;width:1px;height:1px;background:#8a8a8a"></b><span class="vn" style="left:4.5px;top:92.3px">6</span><b class="b" style="left:2.5px;top:105.5px;width:4px;height:1px;background:#8a8a8a"></b><b class="b" style="left:4px;top:98.9px;width:1px;height:1px;background:#8a8a8a"></b><b class="b" style="left:4px;top:112.1px;width:1px;height:1px;background:#8a8a8a"></b><span class="vn" style="left:4.5px;top:118.7px">5</span><b class="b" style="left:2.5px;top:131.9px;width:4px;height:1px;background:#8a8a8a"></b><b class="b" style="left:4px;top:125.3px;width:1px;height:1px;background:#8a8a8a"></b><b class="b" style="left:4px;top:138.5px;width:1px;height:1px;background:#8a8a8a"></b><span class="vn" style="left:4.5px;top:145.1px">4</span><b class="b" style="left:2.5px;top:158.3px;width:4px;height:1px;background:#8a8a8a"></b><b class="b" style="left:4px;top:151.7px;width:1px;height:1px;background:#8a8a8a"></b><b class="b" style="left:4px;top:164.9px;width:1px;height:1px;background:#8a8a8a"></b><span class="vn" style="left:4.5px;top:171.5px">3</span><b class="b" style="left:2.5px;top:184.7px;width:4px;height:1px;background:#8a8a8a"></b><b class="b" style="left:4px;top:178.1px;width:1px;height:1px;background:#8a8a8a"></b><b class="b" style="left:4px;top:191.4px;width:1px;height:1px;background:#8a8a8a"></b><span class="vn" style="left:4.5px;top:198.0px">2</span><b class="b" style="left:2.5px;top:211.2px;width:4px;height:1px;background:#8a8a8a"></b><b class="b" style="left:4px;top:204.6px;width:1px;height:1px;background:#8a8a8a"></b><b class="b" style="left:4px;top:217.8px;width:1px;height:1px;background:#8a8a8a"></b><span class="vn" style="left:4.5px;top:224.4px">1</span><b class="b" style="left:2.5px;top:237.6px;width:4px;height:1px;background:#8a8a8a"></b><b class="b" style="left:4px;top:231.0px;width:1px;height:1px;background:#8a8a8a"></b><b class="b" style="left:4px;top:244.2px;width:1px;height:1px;background:#8a8a8a"></b><span class="vn" style="left:4.5px;top:250.8px">0</span><b class="b" style="left:2.5px;top:264.0px;width:4px;height:1px;background:#8a8a8a"></b><b class="b" style="left:4px;top:257.4px;width:1px;height:1px;background:#8a8a8a"></b><b class="b" style="left:4px;top:270.6px;width:1px;height:1px;background:#8a8a8a"></b><span class="vn" style="left:4.5px;top:277.2px">1</span><b class="b" style="left:2.5px;top:290.4px;width:4px;height:1px;background:#8a8a8a"></b><b class="b" style="left:4px;top:283.8px;width:1px;height:1px;background:#8a8a8a"></b><b class="b" style="left:4px;top:297.0px;width:1px;height:1px;background:#8a8a8a"></b><span class="vn" style="left:4.5px;top:303.6px">2</span><b class="b" style="left:2.5px;top:316.8px;width:4px;height:1px;background:#8a8a8a"></b><b class="b" style="left:4px;top:310.2px;width:1px;height:1px;background:#8a8a8a"></b><b class="b" style="left:4px;top:323.5px;width:1px;height:1px;background:#8a8a8a"></b><span class="vn" style="left:4.5px;top:330.1px">3</span><b class="b" style="left:2.5px;top:343.3px;width:4px;height:1px;background:#8a8a8a"></b><b class="b" style="left:4px;top:336.7px;width:1px;height:1px;background:#8a8a8a"></b><b class="b" style="left:4px;top:349.9px;width:1px;height:1px;background:#8a8a8a"></b><span class="vn" style="left:4.5px;top:356.5px">4</span><b class="b" style="left:2.5px;top:369.7px;width:4px;height:1px;background:#8a8a8a"></b><b class="b" style="left:4px;top:363.1px;width:1px;height:1px;background:#8a8a8a"></b><b class="b" style="left:4px;top:376.3px;width:1px;height:1px;background:#8a8a8a"></b><span class="vn" style="left:4.5px;top:382.9px">5</span><b class="b" style="left:2.5px;top:396.1px;width:4px;height:1px;background:#8a8a8a"></b><b class="b" style="left:4px;top:389.5px;width:1px;height:1px;background:#8a8a8a"></b><b class="b" style="left:4px;top:402.7px;width:1px;height:1px;background:#8a8a8a"></b><span class="vn" style="left:4.5px;top:409.3px">6</span><b class="b" style="left:2.5px;top:422.5px;width:4px;height:1px;background:#8a8a8a"></b><b class="b" style="left:4px;top:415.9px;width:1px;height:1px;background:#8a8a8a"></b><b class="b" style="left:4px;top:429.1px;width:1px;height:1px;background:#8a8a8a"></b><span class="vn" style="left:4.5px;top:435.7px">7</span><b class="b" style="left:2.5px;top:448.9px;width:4px;height:1px;background:#8a8a8a"></b><b class="b" style="left:4px;top:442.3px;width:1px;height:1px;background:#8a8a8a"></b><b class="b" style="left:4px;top:455.6px;width:1px;height:1px;background:#8a8a8a"></b><span class="vn" style="left:4.5px;top:462.2px">8</span><b class="b" style="left:2.5px;top:475.4px;width:4px;height:1px;background:#8a8a8a"></b><b class="b" style="left:4px;top:468.8px;width:1px;height:1px;background:#8a8a8a"></b><b class="b" style="left:4px;top:482.0px;width:1px;height:1px;background:#8a8a8a"></b><span class="vn" style="left:4.5px;top:488.6px">9</span><b class="b" style="left:2.5px;top:501.8px;width:4px;height:1px;background:#8a8a8a"></b><b class="b" style="left:4px;top:495.2px;width:1px;height:1px;background:#8a8a8a"></b><b class="b" style="left:4px;top:508.4px;width:1px;height:1px;background:#8a8a8a"></b></div><div class="b" style="left:1259.3px;top:129.0px;width:10.7px;height:495.0px;background:#dcdcde;"></div><div class="b" style="left:1259.6px;top:624.2px;width:8.8px;height:8.8px;background:#fff;"></div><div class="b" style="left:1259.6px;top:131.3px;width:8.8px;height:9.0px;background:#fff;"></div><svg class="b" style="left:1261.5px;top:134.5px;" width="6" height="4" viewBox="0 0 6 4"><path d="M.4 3.6L3 .6L5.6 3.6Z" fill="#6a6a6a"/></svg><div class="b" style="left:1259.6px;top:201.0px;width:8.8px;height:28.8px;background:#fff;"></div><svg class="b" style="left:1261.2px;top:626.8px;" width="6" height="4" viewBox="0 0 6 4"><path d="M.4 .4L3 3.4L5.6 .4Z" fill="#6a6a6a"/></svg><svg class="b" style="left:1261.7px;top:637.0px;" width="5" height="6" viewBox="0 0 5 6"><path d="M.4 2.6L2.5 .4L4.6 2.6ZM.4 5.6L2.5 3.4L4.6 5.6Z" fill="#6a6a6a"/></svg><svg class="b" style="left:1261.7px;top:648.4px;" width="5" height="6" viewBox="0 0 5 6"><path d="M.4 .4L2.5 2.6L4.6 .4ZM.4 3.4L2.5 5.6L4.6 3.4Z" fill="#6a6a6a"/></svg></div>
<div id="slide" class="serif"><div class="wood"></div><svg class="grain" width="892" height="501" viewBox="0 0 892 501" preserveAspectRatio="none"><defs><filter id="gh" x="0" y="0" width="100%" height="100%"><feTurbulence type="fractalNoise" baseFrequency="0.012 0.26" numOctaves="3" seed="7"/><feColorMatrix type="matrix" values="0 0 0 0 0.13  0 0 0 0 0.05  0 0 0 0 0.01  4.2 0 0 0 -2.0"/></filter></defs><g transform="rotate(-4 446 250)"><rect x="-60" y="-60" width="1012" height="621" filter="url(#gh)" opacity=".85"/></g></svg><div id="paper"><div class="inner"></div></div><div class="clip" style="top:0;height:54px"><i style="bottom:-1px"></i></div><div class="clip" style="top:445px;height:56px"><i style="top:-1px"></i></div><div id="stitle"><div class="ln1" style="left:146.3px;top:59.1px;font-size:32.60px;letter-spacing:0.548px;">Dasar Hukum <span class="sq">Pembentukan</span> <span class="sq">Gugus</span> <span class="sq">Tugas</span></div><div class="ln1" style="left:160.6px;top:94.8px;font-size:32.60px;letter-spacing:0.249px;"><span class="sq">Pencegahan</span> dan <span class="sq">Penanganan</span> <span class="sq">Pornografi</span></div><div class="ln1" style="left:237.0px;top:130.6px;font-size:32.60px;letter-spacing:0.257px;"><span class="sq">Provinsi</span> dan <span class="sq">Kabupaten</span>/Kota</div></div><div id="sline"></div><div class="body"><div class="ln1" style="left:231.0px;top:200.6px;font-size:20.50px;letter-spacing:-0.121px;">Pasal 7</div><div class="ln1" style="left:604.0px;top:200.6px;font-size:20.50px;letter-spacing:-0.049px;">Pasal 8</div><div class="ln1" style="left:124.0px;top:224.0px;font-size:21.00px;letter-spacing:0.312px;">Di <span class="sq">Provinsi</span> <b class="sq">dapat</b> <span class="sq">dibentuk</span> <span class="sq">Gugus</span></div><div class="ln1" style="left:124.0px;top:248.1px;font-size:21.00px;letter-spacing:0.161px;"><span class="sq">Tugas</span> <span class="sq">Provinsi</span> <span class="sq">sesuai</span> <span class="sq">dengan</span></div><div class="ln1" style="left:124.0px;top:272.2px;font-size:21.00px;letter-spacing:0.354px;"><span class="sq">ketentuan</span> <span class="sq">peraturan</span> <span class="sq">perundang</span></div><div class="ln1" style="left:124.0px;top:296.2px;font-size:21.00px;letter-spacing:0.157px;"><span class="sq">undangan</span>.</div><div class="ln1" style="left:124.0px;top:320.3px;font-size:21.00px;letter-spacing:0.232px;"><span class="sq">Gugus</span> <span class="sq">Tugas</span> <span class="sq">Provinsi</span> <span class="sq">berada</span> di</div><div class="ln1" style="left:124.0px;top:344.4px;font-size:21.00px;letter-spacing:0.178px;"><span class="sq">bawah</span> dan <span class="sq">bertanggung</span> <span class="sq">jawab</span></div><div class="ln1" style="left:124.0px;top:368.4px;font-size:21.00px;letter-spacing:0.199px;"><span class="sq">kepada</span> <span class="sq">gubernur</span>.</div><div class="ln1" style="left:492.0px;top:224.0px;font-size:21.00px;letter-spacing:0.577px;">Di <span class="sq">Kabupaten</span>/Kota <b class="sq">dapat</b> <span class="sq">dibentuk</span></div><div class="ln1" style="left:492.0px;top:248.1px;font-size:21.00px;letter-spacing:0.594px;"><span class="sq">Gugus</span> <span class="sq">Tugas</span> <span class="sq">Kabupaten</span>/Kota</div><div class="ln1" style="left:492.0px;top:272.2px;font-size:21.00px;letter-spacing:0.227px;"><span class="sq">sesuai</span> <span class="sq">dengan</span> <span class="sq">ketentuan</span> <span class="sq">peraturan</span></div><div class="ln1" style="left:492.0px;top:296.2px;font-size:21.00px;letter-spacing:0.320px;"><span class="sq">perundang-undangan</span>.</div><div class="ln1" style="left:492.0px;top:320.3px;font-size:21.00px;letter-spacing:0.594px;"><span class="sq">Gugus</span> <span class="sq">Tugas</span> <span class="sq">Kabupaten</span>/Kota</div><div class="ln1" style="left:492.0px;top:344.4px;font-size:21.00px;letter-spacing:0.249px;"><span class="sq">berada</span> di <span class="sq">bawah</span> dan <span class="sq">bertanggung</span></div><div class="ln1" style="left:492.0px;top:368.4px;font-size:21.00px;letter-spacing:0.162px;"><span class="sq">jawab</span> <span class="sq">kepada</span> <span class="sq">bupati</span>/<span class="sq">wali</span> <span class="sq">kota</span>.</div><div class="ln1" style="left:85.3px;top:224.0px;font-size:21.00px;letter-spacing:-0.296px;">(1)</div><div class="ln1" style="left:85.3px;top:320.3px;font-size:21.00px;letter-spacing:-0.296px;">(2)</div><div class="ln1" style="left:453.5px;top:224.0px;font-size:21.00px;letter-spacing:-0.296px;">(1)</div><div class="ln1" style="left:453.5px;top:320.3px;font-size:21.00px;letter-spacing:-0.296px;">(2)</div></div><div id="sfoot"><div class="ln1" style="left:295.8px;top:404.0px;font-size:13.60px;letter-spacing:0.377px;"><span class="sq">Perpres</span> No. 25 <span class="sq">Tahun</span> 2012 <span class="sq">tentang</span> <span class="sq">Gugus</span> <span class="sq">Tugas</span></div><div class="ln1" style="left:322.3px;top:420.2px;font-size:13.60px;letter-spacing:0.354px;"><span class="sq">Pencegahan</span> dan <span class="sq">Penanganan</span> <span class="sq">Pornografi</span></div></div></div>
</div>
<div id="banner"><div class="b" style="left:9.0px;top:13.5px;width:17.2px;height:1.5px;background:#dedede;"></div><div class="b" style="left:9.0px;top:24.6px;width:17.2px;height:1.6px;background:#dedede;"></div><span class="t" style="left:9.0px;top:17.1px;font-size:8.20px;transform:scaleX(0.9437);transform-origin:0 50%;color:#f4f4f4;font-weight:bold;">LIVE</span><span class="t" style="left:32.8px;top:14.2px;font-size:13.00px;letter-spacing:-0.17px;color:#ececec;">The content of this meeting is being sent to one or more apps.</span><svg class="b" style="left:756.5px;top:12.0px;" width="17" height="17" viewBox="0 0 17 17"><circle cx="8.5" cy="8.5" r="7.6" fill="none" stroke="#c8c8c8" stroke-width="1"/><circle cx="8.5" cy="4.9" r=".9" fill="#c8c8c8"/><path d="M8.5 7.2V12.4" stroke="#c8c8c8" stroke-width="1.3"/></svg><div class="b" style="left:783.0px;top:8.5px;width:39.0px;height:24.0px;background:#0e72ed;border-radius:6px"></div><span class="t" style="left:793.0px;top:14.9px;font-size:12.00px;letter-spacing:0.50px;color:#fff;font-weight:bold;">OK</span></div>
<div id="bottombar"><svg class="b" style="left:30.0px;top:8.0px;" width="21" height="21" viewBox="0 0 21 21"><path d="M7.6 4.4C7.6 .8 13.4 .8 13.4 4.4V10C13.4 13.6 7.6 13.6 7.6 10Z" fill="none" stroke="#fff" stroke-width="1.4"/><path d="M4.6 9.6C4.6 17.2 16.4 17.2 16.4 9.6M10.5 15.4V19.2M7 19.6H14" fill="none" stroke="#fff" stroke-width="1.4"/><path d="M19.6 .6L.8 20.2" stroke="#e8175d" stroke-width="1.8"/></svg><span class="t" style="left:27.0px;top:32.8px;font-size:10.40px;letter-spacing:-0.08px;color:#d6d6d6;">Audio</span><svg class="b" style="left:63.5px;top:17.0px;" width="7" height="5" viewBox="0 0 7 5"><path d="M.7 4L3.5 1L6.3 4" fill="none" stroke="#c8c8c8" stroke-width="1.1"/></svg><svg class="b" style="left:106.0px;top:8.0px;" width="24" height="21" viewBox="0 0 24 21"><rect x="2.4" y="5.6" width="12.6" height="10.4" rx="2" fill="none" stroke="#fff" stroke-width="1.4"/><path d="M15.4 10L21.2 6.4V15.4L15.4 12" fill="none" stroke="#fff" stroke-width="1.4"/><path d="M21.6 .6L2.8 20.2" stroke="#e8175d" stroke-width="1.8"/></svg><span class="t" style="left:104.5px;top:32.8px;font-size:10.40px;letter-spacing:-0.18px;color:#d6d6d6;">Video</span><svg class="b" style="left:145.5px;top:17.0px;" width="7" height="5" viewBox="0 0 7 5"><path d="M.7 4L3.5 1L6.3 4" fill="none" stroke="#c8c8c8" stroke-width="1.1"/></svg><svg class="b" style="left:615.0px;top:10.5px;" width="17" height="16" viewBox="0 0 17 16"><circle cx="6" cy="3.6" r="2.8" fill="none" stroke="#fff" stroke-width="1.3"/><path d="M.8 14.6C.8 8.4 11.2 8.4 11.2 14.6Z" fill="none" stroke="#fff" stroke-width="1.3"/><circle cx="12.4" cy="5.8" r="2.1" fill="none" stroke="#fff" stroke-width="1.2"/><path d="M12.6 10C15 10 16.2 11.8 16.2 14.6H13.4" fill="none" stroke="#fff" stroke-width="1.2"/></svg><span class="t" style="left:636.7px;top:12.2px;font-size:10.40px;letter-spacing:0.05px;color:#c8c8c8;">996</span><svg class="b" style="left:664.2px;top:17.0px;" width="7" height="5" viewBox="0 0 7 5"><path d="M.7 4L3.5 1L6.3 4" fill="none" stroke="#c8c8c8" stroke-width="1.1"/></svg><span class="t" style="left:597.5px;top:32.8px;font-size:10.40px;letter-spacing:-0.22px;color:#d6d6d6;">Participants</span><svg class="b" style="left:705.0px;top:12.5px;" width="17" height="16" viewBox="0 0 17 16"><path d="M3.4 1H11.6C13 1 14 2 14 3.4V8.6C14 10 13 11 11.6 11H6.4L3 14V11C1.8 11 1 10 1 8.6V3.4C1 2 2 1 3.4 1Z" fill="none" stroke="#fff" stroke-width="1.3"/><circle cx="4.6" cy="6" r=".9" fill="#fff"/><circle cx="7.5" cy="6" r=".9" fill="#fff"/><circle cx="10.4" cy="6" r=".9" fill="#fff"/></svg><svg class="b" style="left:739.5px;top:17.0px;" width="7" height="5" viewBox="0 0 7 5"><path d="M.7 4L3.5 1L6.3 4" fill="none" stroke="#c8c8c8" stroke-width="1.1"/></svg><div class="b" style="left:718.4px;top:6.0px;width:22.0px;height:13.6px;background:#f0384a;border-radius:7px"></div><span class="t" style="left:721.0px;top:8.9px;font-size:8.20px;letter-spacing:1.03px;color:#fff;font-weight:bold;">99+</span><span class="t" style="left:704.9px;top:32.8px;font-size:10.40px;transform:scaleX(0.9150);transform-origin:0 50%;color:#d6d6d6;">Chat</span><svg class="b" style="left:775.5px;top:10.0px;" width="21" height="18" viewBox="0 0 21 18"><path d="M10.5 16.6C4 11.6 .8 8.6 .8 5.4C.8 1 7.4 -.6 10.5 4C13.6 -.6 20.2 1 20.2 5.4C20.2 8.6 17 11.6 10.5 16.6Z" fill="none" stroke="#fff" stroke-width="1.4" transform="rotate(-8 10.5 9)"/></svg><span class="t" style="left:773.4px;top:32.8px;font-size:10.40px;transform:scaleX(0.9055);transform-origin:0 50%;color:#d6d6d6;">React</span><div class="b" style="left:850.0px;top:10.0px;width:21.0px;height:17.0px;background:#0fdc84;border-radius:3px"></div><svg class="b" style="left:854.5px;top:13.0px;" width="12" height="11" viewBox="0 0 12 11"><path d="M6 10.4V2.4M2 5.6L6 1.4L10 5.6" fill="none" stroke="#0a0a0a" stroke-width="2.2"/></svg><span class="t" style="left:848.3px;top:32.8px;font-size:10.40px;transform:scaleX(0.8900);transform-origin:0 50%;color:#d6d6d6;">Share</span><svg class="b" style="left:930.5px;top:8.5px;" width="20" height="20" viewBox="0 0 20 20"><path d="M8 4C8.8 9.6 10.2 11 15.8 11.8C10.2 12.6 8.8 14 8 19.6C7.2 14 5.8 12.6 .2 11.8C5.8 11 7.2 9.6 8 4Z" fill="none" stroke="#e6b93c" stroke-width="1.2"/><path d="M15.8 .6C16.2 3.2 16.8 3.8 19.4 4.2C16.8 4.6 16.2 5.2 15.8 7.8C15.4 5.2 14.8 4.6 12.2 4.2C14.8 3.8 15.4 3.2 15.8 .6Z" fill="#e6b93c"/></svg><span class="t" style="left:908.0px;top:32.8px;font-size:10.40px;letter-spacing:-0.12px;color:#d6d6d6;">AI Companion</span><svg class="b" style="left:1002.5px;top:9.5px;" width="20" height="19" viewBox="0 0 20 19"><path d="M1 6.6V4C1 2.2 2.2 1 4 1H6.8M13.2 17.6H16C17.8 17.6 19 16.4 19 14.6V12" fill="none" stroke="#fff" stroke-width="1.4"/><circle cx="15.2" cy="4.6" r="2.9" fill="none" stroke="#fff" stroke-width="1.4"/><circle cx="4.8" cy="14" r="2.9" fill="none" stroke="#fff" stroke-width="1.4"/></svg><span class="t" style="left:1001.0px;top:32.8px;font-size:10.40px;transform:scaleX(0.9281);transform-origin:0 50%;color:#d6d6d6;">Apps</span><svg class="b" style="left:1070.5px;top:8.5px;" width="21" height="21" viewBox="0 0 21 21"><circle cx="10.5" cy="10.5" r="9.4" fill="none" stroke="#fff" stroke-width="1.4"/><circle cx="6.4" cy="10.5" r="1.1" fill="#fff"/><circle cx="10.5" cy="10.5" r="1.1" fill="#fff"/><circle cx="14.6" cy="10.5" r="1.1" fill="#fff"/></svg><span class="t" style="left:1069.4px;top:32.8px;font-size:10.40px;letter-spacing:-0.02px;color:#d6d6d6;">More</span><svg class="b" style="left:1550.5px;top:8.0px;" width="23" height="22" viewBox="0 0 23 22"><path d="M12.6 1.8L20.8 .8V17.2L14.4 19.6V3.6" fill="none" stroke="#e8175d" stroke-width="1.5"/><path d="M12.6 1.8H20.8" stroke="#e8175d" stroke-width="1.5"/><circle cx="7" cy="5.4" r="2.1" fill="none" stroke="#fff" stroke-width="1.3"/><path d="M5.6 8.4C3 9.2 2.2 11.2 1.6 13.2L3.4 13.8L4.6 11.6L3.8 15.2L1.4 19.2L3.4 20.2L6.4 16L8.8 20.2L10.8 19.4L8.6 14.6L9.2 11.6L10.2 13.6L11.8 12.8L10.2 9.2C9 8.2 7 8 5.6 8.4Z" fill="none" stroke="#fff" stroke-width="1.2"/></svg><span class="t" style="left:1548.5px;top:32.8px;font-size:10.40px;transform:scaleX(0.8822);transform-origin:0 50%;color:#d6d6d6;">Leave</span></div>
</body>
</html>
